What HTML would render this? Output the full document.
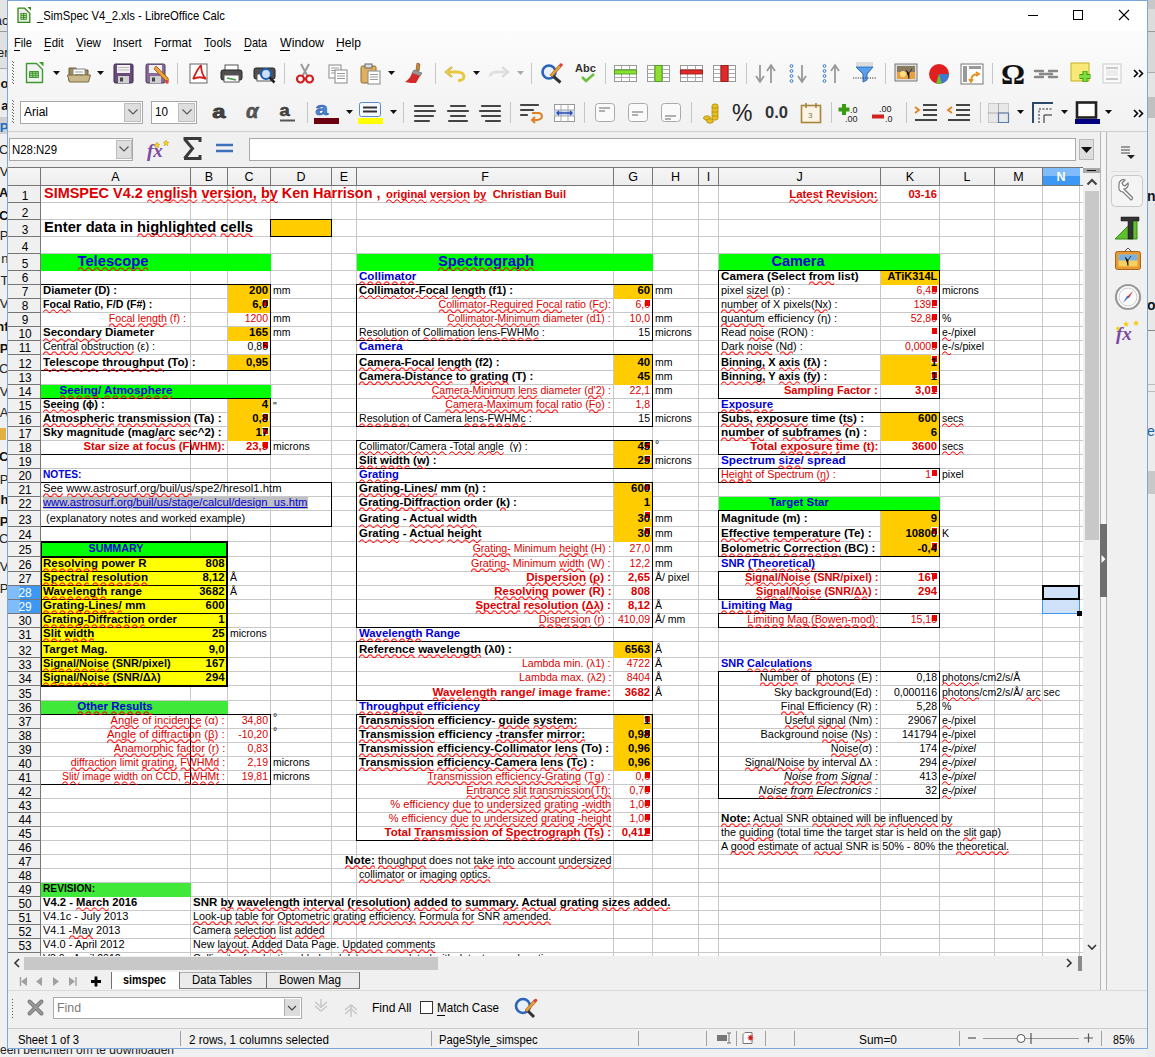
<!DOCTYPE html><html><head><meta charset="utf-8"><style>
html,body{margin:0;padding:0;width:1155px;height:1057px;overflow:hidden;background:#f0f0f0;}
body{position:relative;font-family:"Liberation Sans",sans-serif;}
.t{position:absolute;white-space:pre;line-height:1;}
.r{position:absolute;}
svg.r{overflow:visible;}
.w{position:relative;}
.w svg{position:absolute;left:0;top:100%;margin-top:-1.5px;width:100%;height:4px;overflow:hidden;}
</style></head><body>
<svg width="0" height="0" style="position:absolute"><defs><pattern id="wv" width="8" height="4" patternUnits="userSpaceOnUse"><path d="M-1 3.5 L0 3.5 L2 1 L4 1 L6 3.5 L9 3.5" fill="none" stroke="#f00" stroke-width="1"/></pattern></defs></svg>
<div class="r" style="left:0px;top:0px;width:1155px;height:1057px;background:#f0f0f0;"></div>
<div class="r" style="left:1147px;top:0px;width:8px;height:9px;background:#c8c8c8;"></div>
<div class="r" style="left:1147px;top:9px;width:8px;height:22px;background:#dcdcdc;"></div>
<div class="r" style="left:1147px;top:31px;width:8px;height:1px;background:#999999;"></div>
<div class="r" style="left:1147px;top:32px;width:8px;height:40px;background:#d8d8d8;"></div>
<div class="r" style="left:1147px;top:72px;width:8px;height:1px;background:#aaaaaa;"></div>
<div class="r" style="left:1147px;top:73px;width:8px;height:24px;background:#e4e4e4;"></div>
<div class="r" style="left:1147px;top:97px;width:8px;height:21px;background:#c0c0c0;"></div>
<div class="r" style="left:1147px;top:118px;width:8px;height:212px;background:#e8e8e8;"></div>
<div class="r" style="left:1147px;top:330px;width:8px;height:1px;background:#888888;"></div>
<div class="r" style="left:1147px;top:331px;width:8px;height:53px;background:#ececec;"></div>
<div class="r" style="left:1147px;top:384px;width:8px;height:1px;background:#bbbbbb;"></div>
<div class="r" style="left:1147px;top:385px;width:8px;height:6px;background:#ececec;"></div>
<div class="r" style="left:1147px;top:391px;width:8px;height:1px;background:#bbbbbb;"></div>
<div class="r" style="left:1147px;top:392px;width:8px;height:79px;background:#ececec;"></div>
<div class="r" style="left:1147px;top:471px;width:8px;height:23px;background:#c8c8c8;"></div>
<div class="r" style="left:1147px;top:494px;width:8px;height:563px;background:#ececec;"></div>
<div class="r" style="left:0px;top:0px;width:8px;height:31px;background:#e4e4e4;"></div>
<div class="r" style="left:0px;top:31px;width:8px;height:1px;background:#999;"></div>
<div class="r" style="left:0px;top:32px;width:8px;height:36px;background:#e0e0e0;"></div>
<div class="r" style="left:0px;top:68px;width:8px;height:1px;background:#aaa;"></div>
<div class="r" style="left:0px;top:69px;width:8px;height:48px;background:#ececec;"></div>
<div class="r" style="left:0px;top:117px;width:8px;height:17px;background:#d0d0d0;"></div>
<div class="r" style="left:0px;top:134px;width:8px;height:923px;background:#f0f0f0;"></div>
<div class="t" style="right:1146.50px;top:14.00px;font-size:13px;color:#222;">ac</div>
<div class="t" style="right:1146.50px;top:46.00px;font-size:13px;color:#222;">er</div>
<div class="t" style="right:1146.50px;top:77.00px;font-size:13px;color:#111;font-weight:bold;">o</div>
<div class="t" style="right:1146.50px;top:99.00px;font-size:13px;color:#111;font-weight:bold;">a</div>
<div class="t" style="right:1146.50px;top:121.00px;font-size:13px;color:#1a6fc0;font-weight:bold;">P</div>
<div class="t" style="right:1146.50px;top:143.00px;font-size:13px;color:#222;">C</div>
<div class="t" style="right:1146.50px;top:165.00px;font-size:13px;color:#222;">V</div>
<div class="t" style="right:1146.50px;top:186.00px;font-size:13px;color:#111;font-weight:bold;">A</div>
<div class="t" style="right:1146.50px;top:209.00px;font-size:13px;color:#111;font-weight:bold;">C</div>
<div class="t" style="right:1146.50px;top:229.00px;font-size:13px;color:#222;">P</div>
<div class="t" style="right:1146.50px;top:252.00px;font-size:13px;color:#222;">n</div>
<div class="t" style="right:1146.50px;top:274.00px;font-size:13px;color:#222;">T</div>
<div class="t" style="right:1146.50px;top:297.00px;font-size:13px;color:#222;">V</div>
<div class="t" style="right:1146.50px;top:320.00px;font-size:13px;color:#111;font-weight:bold;">nf</div>
<div class="t" style="right:1146.50px;top:342.00px;font-size:13px;color:#111;font-weight:bold;">P</div>
<div class="t" style="right:1146.50px;top:362.00px;font-size:13px;color:#222;">C</div>
<div class="t" style="right:1146.50px;top:385.00px;font-size:13px;color:#222;">V</div>
<div class="t" style="right:1146.50px;top:406.00px;font-size:13px;color:#222;">A</div>
<div class="t" style="right:1146.50px;top:450.00px;font-size:13px;color:#111;font-weight:bold;">C</div>
<div class="t" style="right:1146.50px;top:473.00px;font-size:13px;color:#222;">P</div>
<div class="t" style="right:1146.50px;top:493.00px;font-size:13px;color:#111;font-weight:bold;">jh</div>
<div class="t" style="right:1146.50px;top:515.00px;font-size:13px;color:#111;font-weight:bold;">P</div>
<div class="t" style="right:1146.50px;top:532.00px;font-size:13px;color:#222;">C</div>
<div class="t" style="right:1146.50px;top:560.00px;font-size:13px;color:#222;">V</div>
<div class="t" style="right:1146.50px;top:582.00px;font-size:13px;color:#222;">P</div>
<div class="r" style="left:0px;top:428px;width:6px;height:12px;background:#e0b040;"></div>
<div class="t" style="left:1147.00px;top:188.65px;font-size:14px;color:#111;font-weight:bold;">n</div>
<div class="t" style="left:1147.00px;top:297.65px;font-size:14px;color:#111;font-weight:bold;">on</div>
<div class="t" style="left:1147.00px;top:424.15px;font-size:14px;color:#1a5fb0;">e</div>
<div class="t" style="left:0.00px;top:1044.42px;font-size:12.5px;color:#222;transform-origin:left top;transform: scaleX(0.9593);">een benchten om te downloaden</div>
<div class="r" style="left:7px;top:0px;width:1141px;height:1049px;background:#7aa7dc;"></div>
<div class="r" style="left:8px;top:1px;width:1139px;height:1047px;background:#f0f0f0;"></div>
<div class="r" style="left:8px;top:1px;width:1139px;height:30px;background:#ffffff;"></div>
<div class="r" style="left:8px;top:31px;width:1139px;height:100px;background:linear-gradient(#fcfcfc,#f1f1f1);"></div>
<div class="r" style="left:8px;top:131px;width:1139px;height:1px;background:#cdcdcd;"></div>
<div class="r" style="left:8px;top:132px;width:1092px;height:35px;background:#f0f0f0;"></div>
<div class="t" style="left:37.00px;top:9.07px;font-size:13.5px;color:#000;transform-origin:left top;transform: scaleX(0.8361);">_SimSpec V4_2.xls - LibreOffice Calc</div>
<svg class="r" style="left:1020px;top:5px" width="120" height="22">
<line x1="8" y1="10.5" x2="18" y2="10.5" stroke="#000" stroke-width="1"/>
<rect x="53.5" y="5.5" width="9" height="9" fill="none" stroke="#000"/>
<line x1="99" y1="5" x2="109" y2="15" stroke="#000" stroke-width="1.1"/><line x1="109" y1="5" x2="99" y2="15" stroke="#000" stroke-width="1.1"/>
</svg>
<svg class="r" style="left:17px;top:7px" width="15" height="17">
<path d="M1 1.2h6.6l5.2 5.2v9H1z" fill="#efeaef" stroke="#2f8a12" stroke-width="1.3" stroke-linejoin="round"/>
<path d="M10.5 0h3.5v3.7z" fill="#2f8a12"/>
<rect x="3.4" y="6" width="6.4" height="6.8" rx="0.6" fill="#2f8a12"/>
<path d="M4.4 7.3h1.7M7.2 7.3h1.7M4.4 9.3h1.7M7.2 9.3h1.7M4.4 11.3h1.7M7.2 11.3h1.7" stroke="#fff" stroke-width="0.9"/>
</svg>
<div class="t" style="left:14.00px;top:36.07px;font-size:13.5px;color:#000;transform-origin:left top;transform: scaleX(0.8275);">File</div>
<div class="t" style="left:44.00px;top:36.07px;font-size:13.5px;color:#000;transform-origin:left top;transform: scaleX(0.8469);">Edit</div>
<div class="t" style="left:75.80px;top:36.07px;font-size:13.5px;color:#000;transform-origin:left top;transform: scaleX(0.8616);">View</div>
<div class="t" style="left:113.20px;top:36.07px;font-size:13.5px;color:#000;transform-origin:left top;transform: scaleX(0.8530);">Insert</div>
<div class="t" style="left:154.00px;top:36.07px;font-size:13.5px;color:#000;transform-origin:left top;transform: scaleX(0.8771);">Format</div>
<div class="t" style="left:204.30px;top:36.07px;font-size:13.5px;color:#000;transform-origin:left top;transform: scaleX(0.8694);">Tools</div>
<div class="t" style="left:244.20px;top:36.07px;font-size:13.5px;color:#000;transform-origin:left top;transform: scaleX(0.8136);">Data</div>
<div class="t" style="left:279.80px;top:36.07px;font-size:13.5px;color:#000;transform-origin:left top;transform: scaleX(0.9164);">Window</div>
<div class="t" style="left:336.00px;top:36.07px;font-size:13.5px;color:#000;transform-origin:left top;transform: scaleX(0.8968);">Help</div>
<div class="r" style="left:14px;top:50px;width:6px;height:1px;background:#000;"></div>
<div class="r" style="left:44px;top:50px;width:6px;height:1px;background:#000;"></div>
<div class="r" style="left:76px;top:50px;width:7px;height:1px;background:#000;"></div>
<div class="r" style="left:113px;top:50px;width:3px;height:1px;background:#000;"></div>
<div class="r" style="left:161px;top:50px;width:7px;height:1px;background:#000;"></div>
<div class="r" style="left:204px;top:50px;width:6px;height:1px;background:#000;"></div>
<div class="r" style="left:244px;top:50px;width:7px;height:1px;background:#000;"></div>
<div class="r" style="left:280px;top:50px;width:10px;height:1px;background:#000;"></div>
<div class="r" style="left:336px;top:50px;width:7px;height:1px;background:#000;"></div>
<div class="r" style="left:12px;top:61px;width:1px;height:1px;background:#6a6a6a;"></div>
<div class="r" style="left:12px;top:64px;width:1px;height:1px;background:#6a6a6a;"></div>
<div class="r" style="left:12px;top:67px;width:1px;height:1px;background:#6a6a6a;"></div>
<div class="r" style="left:12px;top:70px;width:1px;height:1px;background:#6a6a6a;"></div>
<div class="r" style="left:12px;top:73px;width:1px;height:1px;background:#6a6a6a;"></div>
<div class="r" style="left:12px;top:76px;width:1px;height:1px;background:#6a6a6a;"></div>
<div class="r" style="left:12px;top:79px;width:1px;height:1px;background:#6a6a6a;"></div>
<div class="r" style="left:12px;top:82px;width:1px;height:1px;background:#6a6a6a;"></div>
<div class="r" style="left:13px;top:62px;width:1px;height:1px;background:#6a6a6a;"></div>
<div class="r" style="left:13px;top:65px;width:1px;height:1px;background:#6a6a6a;"></div>
<div class="r" style="left:13px;top:68px;width:1px;height:1px;background:#6a6a6a;"></div>
<div class="r" style="left:13px;top:71px;width:1px;height:1px;background:#6a6a6a;"></div>
<div class="r" style="left:13px;top:74px;width:1px;height:1px;background:#6a6a6a;"></div>
<div class="r" style="left:13px;top:77px;width:1px;height:1px;background:#6a6a6a;"></div>
<div class="r" style="left:13px;top:80px;width:1px;height:1px;background:#6a6a6a;"></div>
<div class="r" style="left:13px;top:83px;width:1px;height:1px;background:#6a6a6a;"></div>
<svg class="r" style="left:25px;top:62px" width="19" height="22" viewBox="0 0 19 22"><path d="M1.5 1.5h10l6 6v13h-16z" fill="#f4f2f4" stroke="#3c9a2c" stroke-width="1.4" stroke-linejoin="round"/><path d="M14 0h4.5v4.5z" fill="#3c9a2c"/><rect x="4" y="9" width="10" height="7" rx="0.8" fill="#3c9a2c"/><path d="M5 10.8h2.2M8.2 10.8h2.2M11.2 10.8h2M5 12.6h2.2M8.2 12.6h2.2M11.2 12.6h2M5 14.4h2.2M8.2 14.4h2.2M11.2 14.4h2" stroke="#b8e0a8" stroke-width="0.9"/></svg>
<svg class="r" style="left:53px;top:71px" width="8" height="5" viewBox="0 0 8 5"><path d="M0 0h7l-3.5 4z" fill="#111"/></svg>
<svg class="r" style="left:67px;top:64px" width="24" height="19" viewBox="0 0 24 19"><path d="M2 4h7l2 2h10v11H2z" fill="#a08a5a" stroke="#6e5a32"/><rect x="6" y="5" width="12" height="9" fill="#fff" stroke="#888"/><path d="M8 8h8M8 10.5h8" stroke="#999"/><path d="M0.5 11h23l-2 7H2.5z" fill="#c8b88a" stroke="#7a6a42"/></svg>
<svg class="r" style="left:97px;top:71px" width="8" height="5" viewBox="0 0 8 5"><path d="M0 0h7l-3.5 4z" fill="#111"/></svg>
<svg class="r" style="left:113px;top:63px" width="21" height="21" viewBox="0 0 21 21"><rect x="1" y="1" width="19" height="19" rx="1.5" fill="#6a4a7a" stroke="#3a2a4a"/><rect x="4" y="2" width="13" height="8" fill="#f0f0f0"/><path d="M5 4.5h11M5 7h11" stroke="#bbb"/><rect x="5" y="13" width="11" height="7" fill="#d0d0d0"/><rect x="7" y="14.5" width="3" height="4" fill="#444"/></svg>
<svg class="r" style="left:145px;top:63px" width="25" height="22" viewBox="0 0 25 22"><rect x="1" y="1" width="19" height="19" rx="1.5" fill="#8a6a9a" stroke="#4a3a5a"/><rect x="4" y="2" width="13" height="8" fill="#f0f0f0"/><rect x="5" y="13" width="11" height="7" fill="#d0d0d0"/><rect x="7" y="14.5" width="3" height="4" fill="#444"/><path d="M9 6l12 12 2.5-.5-.5-2.5L11 3z" fill="#f0a030" stroke="#7a4a10" stroke-width="0.7"/><circle cx="22" cy="19" r="1.8" fill="#e04040"/></svg>
<div class="r" style="left:177px;top:63px;width:1px;height:21px;background:#c6c6c6;"></div>
<svg class="r" style="left:189px;top:63px" width="19" height="21" viewBox="0 0 19 21"><rect x="1" y="1" width="17" height="19" fill="#fff" stroke="#666"/><path d="M12 2c-5 6-6 10-8 14M12 2c0 6 1 10 5 14M4 16c4-2 8-3 13 0" fill="none" stroke="#d02020" stroke-width="1.8"/></svg>
<svg class="r" style="left:220px;top:64px" width="23" height="19" viewBox="0 0 23 19"><rect x="5" y="1" width="13" height="6" fill="#fff" stroke="#555"/><rect x="1" y="6" width="21" height="10" rx="2" fill="#505050" stroke="#222"/><rect x="4" y="11" width="15" height="7" fill="#fff" stroke="#555"/><path d="M7 14l9 2" stroke="#4a9a4a" stroke-width="1.5"/></svg>
<svg class="r" style="left:253px;top:64px" width="23" height="20" viewBox="0 0 23 20"><rect x="1" y="4" width="21" height="11" rx="2" fill="#505050" stroke="#222"/><rect x="4" y="10" width="14" height="7" fill="#fff" stroke="#555"/><circle cx="13" cy="10" r="5" fill="#cfe0f5" stroke="#1e5fb0" stroke-width="2.2"/><path d="M16.5 13.5l5 5" stroke="#222" stroke-width="2.5"/></svg>
<div class="r" style="left:284px;top:63px;width:1px;height:21px;background:#c6c6c6;"></div>
<svg class="r" style="left:295px;top:62px" width="20" height="22" viewBox="0 0 20 22"><path d="M6 2l7 13M14 2L7 15" stroke="#9a9a9a" stroke-width="2"/><circle cx="5.5" cy="17" r="3.5" fill="none" stroke="#d02020" stroke-width="2.2"/><circle cx="14.5" cy="17" r="3.5" fill="none" stroke="#d02020" stroke-width="2.2"/></svg>
<svg class="r" style="left:328px;top:64px" width="21" height="20" viewBox="0 0 21 20"><rect x="1" y="1" width="12" height="13" fill="#fff" stroke="#888"/><path d="M3 4h8M3 6.5h8M3 9h8" stroke="#999"/><rect x="7" y="6" width="12" height="13" fill="#fff" stroke="#888"/><path d="M9 9.5h8M9 12h8M9 14.5h8" stroke="#999"/></svg>
<svg class="r" style="left:360px;top:63px" width="22" height="22" viewBox="0 0 22 22"><rect x="1" y="3" width="15" height="17" rx="1.5" fill="#e0b060" stroke="#8a6a2a"/><rect x="5" y="1" width="7" height="4" fill="#ddd" stroke="#666"/><rect x="8" y="8" width="12" height="13" fill="#fff" stroke="#888"/><path d="M10 11.5h8M10 14h8M10 16.5h8" stroke="#999"/></svg>
<svg class="r" style="left:388px;top:71px" width="8" height="5" viewBox="0 0 8 5"><path d="M0 0h7l-3.5 4z" fill="#111"/></svg>
<svg class="r" style="left:404px;top:62px" width="23" height="22" viewBox="0 0 23 22"><path d="M13 1l3 1-1 7-3-1z" fill="#c08840" stroke="#7a4a10" stroke-width="0.6"/><path d="M10 8l8 3-2 3-8-3z" fill="#999" stroke="#555" stroke-width="0.6"/><path d="M8 11l8 3-4 7c-3 0-7 0-11-1 3-2 6-5 7-9z" fill="#d42a2a"/></svg>
<div class="r" style="left:435px;top:63px;width:1px;height:21px;background:#c6c6c6;"></div>
<svg class="r" style="left:444px;top:65px" width="23" height="17" viewBox="0 0 23 17"><path d="M8 2L2 7l6 5" fill="none" stroke="#c8a020" stroke-width="2.2" stroke-linejoin="round"/><path d="M3 7h10c5 0 7 2.5 7 4.5s-2 4-6 4" fill="none" stroke="#e8c840" stroke-width="3"/><path d="M8 2L2 7l6 5" fill="none" stroke="#f0d860" stroke-width="1"/></svg>
<svg class="r" style="left:473px;top:71px" width="8" height="5" viewBox="0 0 8 5"><path d="M0 0h7l-3.5 4z" fill="#111"/></svg>
<svg class="r" style="left:487px;top:65px" width="23" height="17" viewBox="0 0 23 17"><path d="M15 2l6 5-6 5" fill="none" stroke="#d8d8d8" stroke-width="2.2"/><path d="M20 7H10c-5 0-7 2.5-7 4.5" fill="none" stroke="#e0e0e0" stroke-width="3"/></svg>
<svg class="r" style="left:517px;top:71px" width="8" height="5" viewBox="0 0 8 5"><path d="M0 0h7l-3.5 4z" fill="#aaa"/></svg>
<div class="r" style="left:531px;top:63px;width:1px;height:21px;background:#c6c6c6;"></div>
<svg class="r" style="left:540px;top:62px" width="24" height="22" viewBox="0 0 24 22"><circle cx="9" cy="10" r="6.5" fill="#eaf2fb" stroke="#2a63b8" stroke-width="2.6"/><path d="M13.5 14.5l7 6" stroke="#333" stroke-width="3"/><path d="M10 13l9-10 2 2-9 10z" fill="#f0a030" stroke="#7a4a10" stroke-width="0.6"/><circle cx="21" cy="3" r="1.8" fill="#e04040"/></svg>
<svg class="r" style="left:574px;top:62px" width="24" height="22" viewBox="0 0 24 22"><text x="1" y="10" font-family="Liberation Sans" font-weight="bold" font-size="11" fill="#333">Abc</text><path d="M8 15l4 4 8-7" fill="none" stroke="#6cc040" stroke-width="2.6"/></svg>
<div class="r" style="left:605px;top:63px;width:1px;height:21px;background:#c6c6c6;"></div>
<svg class="r" style="left:613px;top:63px" width="25" height="21" viewBox="0 0 25 21"><rect x="1.5" y="2.5" width="22" height="16" fill="#fff" stroke="#999"/><path d="M1.5 6.5h22" stroke="#aaa"/><path d="M1.5 10.5h22" stroke="#aaa"/><path d="M1.5 14.5h22" stroke="#aaa"/><path d="M8.5 2.5v16" stroke="#aaa"/><path d="M16.5 2.5v16" stroke="#aaa"/><rect x="1.5" y="7" width="22" height="4" fill="#8ee030" stroke="#3a9a10" stroke-width="0.8"/></svg>
<svg class="r" style="left:646px;top:63px" width="25" height="21" viewBox="0 0 25 21"><rect x="1.5" y="2.5" width="22" height="16" fill="#fff" stroke="#999"/><path d="M1.5 6.5h22" stroke="#aaa"/><path d="M1.5 10.5h22" stroke="#aaa"/><path d="M1.5 14.5h22" stroke="#aaa"/><path d="M8.5 2.5v16" stroke="#aaa"/><path d="M16.5 2.5v16" stroke="#aaa"/><rect x="9" y="2.5" width="7" height="16" fill="#8ee030" stroke="#3a9a10" stroke-width="0.8"/></svg>
<svg class="r" style="left:679px;top:63px" width="25" height="21" viewBox="0 0 25 21"><rect x="1.5" y="2.5" width="22" height="16" fill="#fff" stroke="#999"/><path d="M1.5 6.5h22" stroke="#aaa"/><path d="M1.5 10.5h22" stroke="#aaa"/><path d="M1.5 14.5h22" stroke="#aaa"/><path d="M8.5 2.5v16" stroke="#aaa"/><path d="M16.5 2.5v16" stroke="#aaa"/><rect x="1.5" y="7" width="22" height="4" fill="#e02a2a" stroke="#9a1010" stroke-width="0.8"/></svg>
<svg class="r" style="left:712px;top:63px" width="25" height="21" viewBox="0 0 25 21"><rect x="1.5" y="2.5" width="22" height="16" fill="#fff" stroke="#999"/><path d="M1.5 6.5h22" stroke="#aaa"/><path d="M1.5 10.5h22" stroke="#aaa"/><path d="M1.5 14.5h22" stroke="#aaa"/><path d="M8.5 2.5v16" stroke="#aaa"/><path d="M16.5 2.5v16" stroke="#aaa"/><rect x="9" y="2.5" width="7" height="16" fill="#e02a2a" stroke="#9a1010" stroke-width="0.8"/></svg>
<div class="r" style="left:746px;top:63px;width:1px;height:21px;background:#c6c6c6;"></div>
<svg class="r" style="left:753px;top:63px" width="26" height="22" viewBox="0 0 26 22"><path d="M7 2v16M3 13l4 6 4-6" fill="none" stroke="#999" stroke-width="1.8"/><path d="M18 20V4M14 8l4-6 4 6" fill="none" stroke="#999" stroke-width="1.8"/></svg>
<svg class="r" style="left:788px;top:63px" width="22" height="22" viewBox="0 0 22 22"><circle cx="3.5" cy="3" r="1.4" fill="none" stroke="#3a7ad0"/><circle cx="3.5" cy="8" r="1.4" fill="none" stroke="#3a7ad0"/><circle cx="3.5" cy="13" r="1.4" fill="none" stroke="#3a7ad0"/><circle cx="3.5" cy="18" r="1.4" fill="none" stroke="#3a7ad0"/><path d="M14 2v16M10 13l4 6 4-6" fill="none" stroke="#999" stroke-width="1.8"/></svg>
<svg class="r" style="left:821px;top:63px" width="22" height="22" viewBox="0 0 22 22"><circle cx="3.5" cy="3" r="1.4" fill="none" stroke="#3a7ad0"/><circle cx="3.5" cy="8" r="1.4" fill="none" stroke="#3a7ad0"/><circle cx="3.5" cy="13" r="1.4" fill="none" stroke="#3a7ad0"/><circle cx="3.5" cy="18" r="1.4" fill="none" stroke="#3a7ad0"/><path d="M14 20V4M10 8l4-6 4 6" fill="none" stroke="#999" stroke-width="1.8"/></svg>
<svg class="r" style="left:853px;top:62px" width="23" height="22" viewBox="0 0 23 22"><rect x="3" y="0" width="17" height="4" fill="#ddd"/><path d="M3 5h17l-6 7v6l-4 2v-8z" fill="#5aa0e8" stroke="#2a6ab8"/><path d="M0 16h23" stroke="#333" stroke-dasharray="1.2 1.2"/></svg>
<div class="r" style="left:885px;top:63px;width:1px;height:21px;background:#c6c6c6;"></div>
<svg class="r" style="left:894px;top:63px" width="24" height="20" viewBox="0 0 24 20"><rect x="1" y="1" width="22" height="17" fill="#ddd" stroke="#777"/><rect x="3" y="3" width="18" height="13" fill="#e8a040"/><rect x="3" y="3" width="18" height="6" fill="#8a7a60"/><circle cx="9" cy="11" r="3" fill="#ffe080"/><path d="M15 16v-6l-3-3M15 10l3-4" stroke="#333" stroke-width="1"/></svg>
<svg class="r" style="left:928px;top:63px" width="22" height="22" viewBox="0 0 22 22"><circle cx="11" cy="11" r="10" fill="#e02020"/><path d="M11 11L21 11A10 10 0 0 1 14 20.5z" fill="#3a7ad0"/><path d="M11 11L14 20.5A10 10 0 0 1 8 20.5z" fill="#6cc040"/></svg>
<svg class="r" style="left:960px;top:63px" width="24" height="22" viewBox="0 0 24 22"><rect x="1" y="1" width="22" height="20" fill="#fff" stroke="#777"/><rect x="3" y="3" width="4" height="16" fill="#999"/><rect x="9" y="3" width="12" height="3" fill="#999"/><path d="M11 18c0-5 2-7 7-7M16 9l3 2-3 2M9 16l2 3 2-3" fill="none" stroke="#e89020" stroke-width="1.8"/></svg>
<div class="r" style="left:992px;top:63px;width:1px;height:21px;background:#c6c6c6;"></div>
<svg class="r" style="left:1001px;top:62px" width="25" height="24" viewBox="0 0 25 24"><text x="0" y="22" font-family="Liberation Serif" font-weight="bold" font-size="30" fill="#111">Ω</text></svg>
<svg class="r" style="left:1034px;top:67px" width="24" height="14" viewBox="0 0 24 14"><path d="M1 4h8M1 10h8M15 4h8M15 10h8M6 7h12" stroke="#888" stroke-width="2.4" stroke-linecap="round"/></svg>
<svg class="r" style="left:1070px;top:62px" width="22" height="22" viewBox="0 0 22 22"><rect x="1" y="1" width="18" height="18" fill="#f8e878" stroke="#c8b020"/><path d="M15 9v11M9.5 14.5h11" stroke="#3a9a10" stroke-width="5"/><path d="M15 9.5v10M10 14.5h10" stroke="#7ee040" stroke-width="3"/></svg>
<svg class="r" style="left:1102px;top:63px" width="20" height="21" viewBox="0 0 20 21"><rect x="1" y="1" width="18" height="19" fill="#fafafa" stroke="#ccc"/><path d="M4 5h12M4 16h12" stroke="#bbb" stroke-width="1.6"/><path d="M4 8h12M4 10h12M4 12h12" stroke="#ddd"/></svg>
<svg class="r" style="left:1133px;top:69px" width="12" height="9" viewBox="0 0 12 9"><path d="M1 1l3.5 3.5L1 8M6 1l3.5 3.5L6 8" fill="none" stroke="#000" stroke-width="1.6"/></svg>
<div class="r" style="left:12px;top:100px;width:1px;height:1px;background:#6a6a6a;"></div>
<div class="r" style="left:12px;top:103px;width:1px;height:1px;background:#6a6a6a;"></div>
<div class="r" style="left:12px;top:106px;width:1px;height:1px;background:#6a6a6a;"></div>
<div class="r" style="left:12px;top:109px;width:1px;height:1px;background:#6a6a6a;"></div>
<div class="r" style="left:12px;top:112px;width:1px;height:1px;background:#6a6a6a;"></div>
<div class="r" style="left:12px;top:115px;width:1px;height:1px;background:#6a6a6a;"></div>
<div class="r" style="left:12px;top:118px;width:1px;height:1px;background:#6a6a6a;"></div>
<div class="r" style="left:12px;top:121px;width:1px;height:1px;background:#6a6a6a;"></div>
<div class="r" style="left:13px;top:101px;width:1px;height:1px;background:#6a6a6a;"></div>
<div class="r" style="left:13px;top:104px;width:1px;height:1px;background:#6a6a6a;"></div>
<div class="r" style="left:13px;top:107px;width:1px;height:1px;background:#6a6a6a;"></div>
<div class="r" style="left:13px;top:110px;width:1px;height:1px;background:#6a6a6a;"></div>
<div class="r" style="left:13px;top:113px;width:1px;height:1px;background:#6a6a6a;"></div>
<div class="r" style="left:13px;top:116px;width:1px;height:1px;background:#6a6a6a;"></div>
<div class="r" style="left:13px;top:119px;width:1px;height:1px;background:#6a6a6a;"></div>
<div class="r" style="left:13px;top:122px;width:1px;height:1px;background:#6a6a6a;"></div>
<div class="r" style="left:20px;top:101px;width:123px;height:23px;background:#a8a8a8;"></div>
<div class="r" style="left:21px;top:102px;width:121px;height:21px;background:#ffffff;"></div>
<div class="r" style="left:124px;top:103px;width:17px;height:19px;background:#dedede;"></div>
<div class="r" style="left:124px;top:103px;width:17px;height:1px;background:#bdbdbd;"></div>
<div class="r" style="left:124px;top:103px;width:1px;height:19px;background:#bdbdbd;"></div>
<div class="r" style="left:140px;top:103px;width:1px;height:19px;background:#bdbdbd;"></div>
<div class="r" style="left:124px;top:121px;width:17px;height:1px;background:#bdbdbd;"></div>
<svg class="r" style="left:127px;top:108px" width="12" height="8" viewBox="0 0 12 8"><path d="M1.5 1.5l4.5 4.5 4.5-4.5" fill="none" stroke="#555" stroke-width="1.1"/></svg>
<div class="t" style="left:24.00px;top:106.42px;font-size:12.5px;color:#000;transform-origin:left top;transform: scaleX(0.9598);">Arial</div>
<div class="r" style="left:151px;top:101px;width:46px;height:23px;background:#a8a8a8;"></div>
<div class="r" style="left:152px;top:102px;width:44px;height:21px;background:#ffffff;"></div>
<div class="r" style="left:178px;top:103px;width:17px;height:19px;background:#dedede;"></div>
<div class="r" style="left:178px;top:103px;width:17px;height:1px;background:#bdbdbd;"></div>
<div class="r" style="left:178px;top:103px;width:1px;height:19px;background:#bdbdbd;"></div>
<div class="r" style="left:194px;top:103px;width:1px;height:19px;background:#bdbdbd;"></div>
<div class="r" style="left:178px;top:121px;width:17px;height:1px;background:#bdbdbd;"></div>
<svg class="r" style="left:181px;top:108px" width="12" height="8" viewBox="0 0 12 8"><path d="M1.5 1.5l4.5 4.5 4.5-4.5" fill="none" stroke="#555" stroke-width="1.1"/></svg>
<div class="t" style="left:155.00px;top:106.42px;font-size:12.5px;color:#000;transform-origin:left top;transform: scaleX(0.9350);">10</div>
<svg class="r" style="left:211px;top:100px" width="24" height="24" viewBox="0 0 24 24"><text x="1" y="18" transform="scale(1.25,1)" font-family="Liberation Sans" font-weight="bold" font-size="19" fill="#444" stroke="#333" stroke-width="0.8">a</text></svg>
<svg class="r" style="left:245px;top:100px" width="22" height="24" viewBox="0 0 22 24"><text x="1" y="18" font-family="Liberation Sans" font-style="italic" font-weight="bold" font-size="20" fill="#555" stroke="#444" stroke-width="0.5">α</text></svg>
<svg class="r" style="left:279px;top:100px" width="20" height="26" viewBox="0 0 20 26"><text x="0.5" y="16" transform="scale(1.15,1)" font-family="Liberation Sans" font-weight="bold" font-size="16" fill="#444" stroke="#333" stroke-width="0.5">a</text><path d="M1 20.5h15" stroke="#555" stroke-width="2"/></svg>
<div class="r" style="left:307px;top:102px;width:1px;height:21px;background:#c6c6c6;"></div>
<svg class="r" style="left:314px;top:99px" width="26" height="26" viewBox="0 0 26 26"><text x="1" y="16" transform="scale(1.2,1)" font-family="Liberation Sans" font-weight="bold" font-size="19" fill="#4a88d8" stroke="#2a5aa8" stroke-width="0.6">a</text><rect x="0" y="19" width="25" height="6" fill="#6a0010"/></svg>
<svg class="r" style="left:346px;top:110px" width="8" height="5" viewBox="0 0 8 5"><path d="M0 0h7l-3.5 4z" fill="#111"/></svg>
<svg class="r" style="left:358px;top:101px" width="26" height="24" viewBox="0 0 26 24"><rect x="1.5" y="1.5" width="21" height="14" rx="2" fill="#f4f8ff" stroke="#5a8ad0"/><path d="M5 6.5h14M5 10.5h14" stroke="#333" stroke-width="2"/><rect x="0" y="17" width="25" height="6" fill="#ffff00"/></svg>
<svg class="r" style="left:390px;top:110px" width="8" height="5" viewBox="0 0 8 5"><path d="M0 0h7l-3.5 4z" fill="#111"/></svg>
<div class="r" style="left:403px;top:102px;width:1px;height:21px;background:#c6c6c6;"></div>
<svg class="r" style="left:413px;top:103px" width="22" height="20" viewBox="0 0 22 20"><path d="M2 3h18" stroke="#444" stroke-width="2.2" stroke-linecap="round"/><path d="M2 8h20" stroke="#444" stroke-width="2.2" stroke-linecap="round"/><path d="M2 13h18" stroke="#444" stroke-width="2.2" stroke-linecap="round"/><path d="M2 18h14" stroke="#444" stroke-width="2.2" stroke-linecap="round"/></svg>
<svg class="r" style="left:446px;top:103px" width="22" height="20" viewBox="0 0 22 20"><path d="M5 3h14" stroke="#444" stroke-width="2.2" stroke-linecap="round"/><path d="M2 8h20" stroke="#444" stroke-width="2.2" stroke-linecap="round"/><path d="M5 13h14" stroke="#444" stroke-width="2.2" stroke-linecap="round"/><path d="M3 18h18" stroke="#444" stroke-width="2.2" stroke-linecap="round"/></svg>
<svg class="r" style="left:479px;top:103px" width="22" height="20" viewBox="0 0 22 20"><path d="M3 3h18" stroke="#444" stroke-width="2.2" stroke-linecap="round"/><path d="M1 8h20" stroke="#444" stroke-width="2.2" stroke-linecap="round"/><path d="M3 13h18" stroke="#444" stroke-width="2.2" stroke-linecap="round"/><path d="M7 18h14" stroke="#444" stroke-width="2.2" stroke-linecap="round"/></svg>
<div class="r" style="left:510px;top:102px;width:1px;height:21px;background:#c6c6c6;"></div>
<svg class="r" style="left:519px;top:102px" width="26" height="22" viewBox="0 0 26 22"><path d="M2 3h17M2 8h12M2 13h6" stroke="#444" stroke-width="2.2" stroke-linecap="round"/><path d="M13 11h6c3 0 4 2 4 3.5S21 18 18 18h-4M16 15l-3 3 3 3" fill="none" stroke="#e08020" stroke-width="2"/></svg>
<svg class="r" style="left:553px;top:102px" width="23" height="22" viewBox="0 0 23 22"><rect x="1.5" y="2.5" width="20" height="17" fill="#fff" stroke="#999"/><rect x="1.5" y="8" width="20" height="6" fill="#c8dcf4"/><path d="M1.5 8h20M1.5 14h20M8 2.5v17M15 2.5v17" stroke="#aaa"/><path d="M4 11h15M6 9l-2 2 2 2M17 9l2 2-2 2" fill="none" stroke="#2a4ab0" stroke-width="1.3"/></svg>
<div class="r" style="left:584px;top:102px;width:1px;height:21px;background:#c6c6c6;"></div>
<svg class="r" style="left:594px;top:102px" width="22" height="21" viewBox="0 0 22 21"><rect x="1.5" y="1.5" width="19" height="18" rx="3" fill="#fafafa" stroke="#aaa"/><path d="M5 6h11M5 9h6" stroke="#666" stroke-width="1"/></svg>
<svg class="r" style="left:627px;top:102px" width="22" height="21" viewBox="0 0 22 21"><rect x="1.5" y="1.5" width="19" height="18" rx="3" fill="#fafafa" stroke="#aaa"/><path d="M5 10h11M5 13h6" stroke="#666" stroke-width="1"/></svg>
<svg class="r" style="left:660px;top:102px" width="22" height="21" viewBox="0 0 22 21"><rect x="1.5" y="1.5" width="19" height="18" rx="3" fill="#fafafa" stroke="#aaa"/><path d="M5 14h11M5 17h6" stroke="#666" stroke-width="1"/></svg>
<div class="r" style="left:691px;top:102px;width:1px;height:21px;background:#c6c6c6;"></div>
<svg class="r" style="left:703px;top:102px" width="18" height="22" viewBox="0 0 18 22"><rect x="9" y="2" width="6" height="16" rx="2" fill="#e8c020" stroke="#b08a10" stroke-width="0.8"/><path d="M9 6h6M9 10h6M9 14h6" stroke="#b08a10" stroke-width="0.8"/><ellipse cx="4" cy="16" rx="3.5" ry="2.2" fill="#e8c020" stroke="#b08a10" stroke-width="0.8"/><ellipse cx="7" cy="19" rx="3.5" ry="2.2" fill="#e8c020" stroke="#b08a10" stroke-width="0.8"/></svg>
<svg class="r" style="left:731px;top:101px" width="26" height="24" viewBox="0 0 26 24"><text x="1" y="20" font-family="Liberation Sans" font-size="23" fill="#222">%</text></svg>
<div class="t" style="left:765.00px;top:105.46px;font-size:16px;color:#333;font-weight:bold;transform-origin:left top;transform: scaleX(1.0341);">0.0</div>
<svg class="r" style="left:800px;top:102px" width="22" height="22" viewBox="0 0 22 22"><rect x="1.5" y="3.5" width="19" height="17" fill="#fbf4e4" stroke="#a8843a" stroke-width="1.6"/><path d="M6 1v5M16 1v5" stroke="#a8843a" stroke-width="1.6"/><text x="8" y="16" font-family="Liberation Sans" font-size="8" fill="#777">3</text></svg>
<div class="r" style="left:831px;top:102px;width:1px;height:21px;background:#c6c6c6;"></div>
<svg class="r" style="left:838px;top:102px" width="26" height="22" viewBox="0 0 26 22"><path d="M6 2v11M0.5 7.5h11" stroke="#3a9a10" stroke-width="4"/><text x="12" y="11" font-family="Liberation Sans" font-size="9" fill="#222">.0</text><text x="7" y="20" font-family="Liberation Sans" font-size="9" fill="#222">.00</text></svg>
<svg class="r" style="left:871px;top:102px" width="26" height="22" viewBox="0 0 26 22"><text x="8" y="10" font-family="Liberation Sans" font-size="9" fill="#222">.00</text><rect x="1" y="12.5" width="12" height="4" fill="#d02020"/><text x="14" y="20" font-family="Liberation Sans" font-size="9" fill="#222">.0</text></svg>
<div class="r" style="left:906px;top:102px;width:1px;height:21px;background:#c6c6c6;"></div>
<svg class="r" style="left:913px;top:103px" width="26" height="20" viewBox="0 0 26 20"><path d="M10 2h14M10 7h14M10 12h14M2 17h22" stroke="#444" stroke-width="2"/><path d="M2 4l4 3-4 3" fill="none" stroke="#e08020" stroke-width="1.8"/></svg>
<svg class="r" style="left:946px;top:103px" width="26" height="20" viewBox="0 0 26 20"><path d="M10 2h14M10 7h14M10 12h14M2 17h22" stroke="#444" stroke-width="2"/><path d="M6 4L2 7l4 3" fill="none" stroke="#e08020" stroke-width="1.8"/></svg>
<div class="r" style="left:980px;top:102px;width:1px;height:21px;background:#c6c6c6;"></div>
<svg class="r" style="left:987px;top:102px" width="24" height="22" viewBox="0 0 24 22"><rect x="1.5" y="1.5" width="20" height="19" fill="#e8e8e8" stroke="#ccc"/><path d="M11.5 1.5v19M1.5 11h20" stroke="#777" stroke-dasharray="1 1"/><path d="M11.5 11h10v9.5h-10z" fill="none" stroke="#5a7ab0" stroke-width="1.2"/></svg>
<svg class="r" style="left:1017px;top:110px" width="8" height="5" viewBox="0 0 8 5"><path d="M0 0h7l-3.5 4z" fill="#111"/></svg>
<svg class="r" style="left:1031px;top:101px" width="24" height="24" viewBox="0 0 24 24"><path d="M2 22V2h20" fill="none" stroke="#2a4a6a" stroke-width="2"/><path d="M8 22V8h14" fill="none" stroke="#222" stroke-dasharray="2 1.5"/><path d="M13 22v-8h8" fill="none" stroke="#222" stroke-width="1"/></svg>
<svg class="r" style="left:1061px;top:110px" width="8" height="5" viewBox="0 0 8 5"><path d="M0 0h7l-3.5 4z" fill="#111"/></svg>
<svg class="r" style="left:1075px;top:101px" width="25" height="24" viewBox="0 0 25 24"><rect x="2" y="1.5" width="19" height="15" fill="#fff" stroke="#222" stroke-width="2.6"/><rect x="0" y="18" width="25" height="5" fill="#000080"/></svg>
<svg class="r" style="left:1105px;top:110px" width="8" height="5" viewBox="0 0 8 5"><path d="M0 0h7l-3.5 4z" fill="#111"/></svg>
<svg class="r" style="left:1133px;top:109px" width="12" height="9" viewBox="0 0 12 9"><path d="M1 1l3.5 3.5L1 8M6 1l3.5 3.5L6 8" fill="none" stroke="#000" stroke-width="1.6"/></svg>
<div class="r" style="left:9px;top:138px;width:124px;height:23px;background:#a8a8a8;"></div>
<div class="r" style="left:10px;top:139px;width:122px;height:21px;background:#ffffff;"></div>
<div class="r" style="left:116px;top:140px;width:16px;height:19px;background:#dedede;"></div>
<div class="r" style="left:116px;top:140px;width:1px;height:19px;background:#bdbdbd;"></div>
<div class="r" style="left:131px;top:140px;width:1px;height:19px;background:#bdbdbd;"></div>
<div class="r" style="left:116px;top:140px;width:16px;height:1px;background:#bdbdbd;"></div>
<div class="r" style="left:116px;top:158px;width:16px;height:1px;background:#bdbdbd;"></div>
<svg class="r" style="left:118px;top:145px" width="12" height="8" viewBox="0 0 12 8"><path d="M1.5 1.5l4.5 4.5 4.5-4.5" fill="none" stroke="#555" stroke-width="1.1"/></svg>
<div class="t" style="left:12.00px;top:144.42px;font-size:12.5px;color:#000;transform-origin:left top;transform: scaleX(0.9121);">N28:N29</div>
<svg class="r" style="left:147px;top:137px" width="24" height="24" viewBox="0 0 24 24"><text x="0" y="20" font-family="Liberation Serif" font-style="italic" font-weight="bold" font-size="19" fill="#7a4aa0">fx</text><path d="M10 5l1 2 2 .3-1.5 1.4.4 2-1.9-1-1.9 1 .4-2L7 7.3 9 7z" fill="#f0d020" stroke="#b09010" stroke-width="0.4"/><path d="M19 3l1 2 2 .3-1.5 1.4.4 2-1.9-1-1.9 1 .4-2L16 5.3 18 5z" fill="#f0d020" stroke="#b09010" stroke-width="0.4"/></svg>
<svg class="r" style="left:182px;top:136px" width="20" height="26" viewBox="0 0 20 26"><path d="M1.5 2.5h16.5v3.5M2.5 3l8 9.5-8 10M2 22.5h16v-3.5" fill="none" stroke="#3a3a3a" stroke-width="3" stroke-linejoin="miter"/></svg>
<svg class="r" style="left:215px;top:141px" width="19" height="14" viewBox="0 0 19 14"><path d="M1 4h17M1 10h17" stroke="#3a70b8" stroke-width="2.6"/></svg>
<div class="r" style="left:249px;top:138px;width:827px;height:23px;background:#a8a8a8;"></div>
<div class="r" style="left:250px;top:139px;width:825px;height:21px;background:#ffffff;"></div>
<div class="r" style="left:1079px;top:139px;width:15px;height:21px;background:#b8b8b8;"></div>
<div class="r" style="left:1080px;top:140px;width:13px;height:19px;background:#dedede;"></div>
<svg class="r" style="left:1080px;top:146px" width="13" height="8" viewBox="0 0 13 8"><path d="M1 1h11l-5.5 6z" fill="#111"/></svg>
<div class="r" style="left:1107px;top:132px;width:40px;height:916px;background:#f0f0f0;"></div>
<svg class="r" style="left:1119px;top:145px" width="18" height="14" viewBox="0 0 18 14"><path d="M2 2h9M2 5h9M2 8h9" stroke="#444" stroke-width="1.2"/><path d="M8 10h8l-4 4z" fill="#222"/></svg>
<div class="r" style="left:1111px;top:171px;width:29px;height:1px;background:#dcdcdc;"></div>
<svg class="r" style="left:1111px;top:175px" width="32" height="32" viewBox="0 0 32 32"><rect x="0.5" y="0.5" width="31" height="31" rx="4" fill="#f4f4f4" stroke="#c8c8c8"/><path d="M8 9c0-3 3-5 6-4l-3 3 1 2 2 1 3-3c1 3-1 6-4 6l8 8c1 1 0 3-1 3l-8-8c-3 0-5-3-4-6z" fill="#fff" stroke="#777" stroke-width="1.2"/></svg>
<svg class="r" style="left:1113px;top:213px" width="30" height="30" viewBox="0 0 30 30"><path d="M2 26L24 4v22z" fill="#5fc030" stroke="#3a8a10"/><path d="M8 4h18v4h-6v18h-5V8h-7z" fill="#333" stroke="#111" stroke-width="0.5"/></svg>
<svg class="r" style="left:1114px;top:246px" width="28" height="26" viewBox="0 0 28 26"><path d="M14 2l-4 4M14 2l4 4" stroke="#555"/><rect x="1.5" y="5.5" width="25" height="18" rx="2" fill="#e89a30" stroke="#a8641a"/><rect x="4.5" y="8.5" width="19" height="12" fill="#f8d060"/><rect x="4.5" y="8.5" width="19" height="6" fill="#7ab0e0"/><path d="M14 20v-6l-3-3M14 14l3-4" stroke="#333"/></svg>
<svg class="r" style="left:1114px;top:283px" width="28" height="28" viewBox="0 0 28 28"><circle cx="14" cy="14" r="12" fill="#fff" stroke="#999" stroke-width="2.2"/><circle cx="14" cy="14" r="9" fill="#fafafa" stroke="#ccc"/><path d="M19 8l-4 7-2-1z" fill="#d03030"/><path d="M9 20l4-7 2 1z" fill="#3a6ad0"/></svg>
<svg class="r" style="left:1114px;top:318px" width="28" height="26" viewBox="0 0 28 26"><text x="2" y="22" font-family="Liberation Serif" font-style="italic" font-weight="bold" font-size="19" fill="#7a4aa0">fx</text><path d="M12 3l1 2 2 .3-1.5 1.4.4 2-1.9-1-1.9 1 .4-2L9 5.3 11 5z" fill="#f0d020"/><path d="M22 2l1 2 2 .3-1.5 1.4.4 2-1.9-1-1.9 1 .4-2L19 4.3 21 4z" fill="#f0d020"/><path d="M4 8l.8 1.6 1.7.2-1.2 1.1.3 1.7-1.6-.8-1.6.8.3-1.7L1.5 9.8l1.7-.2z" fill="#f0d020"/></svg>
<div class="r" style="left:41px;top:186px;width:1042px;height:770px;background:#ffffff;"></div>
<div class="r" style="left:41px;top:202px;width:1042px;height:1px;background:#c8c8c8;"></div>
<div class="r" style="left:41px;top:219px;width:1042px;height:1px;background:#c8c8c8;"></div>
<div class="r" style="left:41px;top:236px;width:1042px;height:1px;background:#c8c8c8;"></div>
<div class="r" style="left:41px;top:253px;width:1042px;height:1px;background:#c8c8c8;"></div>
<div class="r" style="left:41px;top:270px;width:1042px;height:1px;background:#c8c8c8;"></div>
<div class="r" style="left:41px;top:284px;width:1042px;height:1px;background:#c8c8c8;"></div>
<div class="r" style="left:41px;top:298px;width:1042px;height:1px;background:#c8c8c8;"></div>
<div class="r" style="left:41px;top:312px;width:1042px;height:1px;background:#c8c8c8;"></div>
<div class="r" style="left:41px;top:326px;width:1042px;height:1px;background:#c8c8c8;"></div>
<div class="r" style="left:41px;top:340px;width:1042px;height:1px;background:#c8c8c8;"></div>
<div class="r" style="left:41px;top:354px;width:1042px;height:1px;background:#c8c8c8;"></div>
<div class="r" style="left:41px;top:370px;width:1042px;height:1px;background:#c8c8c8;"></div>
<div class="r" style="left:41px;top:384px;width:1042px;height:1px;background:#c8c8c8;"></div>
<div class="r" style="left:41px;top:398px;width:1042px;height:1px;background:#c8c8c8;"></div>
<div class="r" style="left:41px;top:412px;width:1042px;height:1px;background:#c8c8c8;"></div>
<div class="r" style="left:41px;top:426px;width:1042px;height:1px;background:#c8c8c8;"></div>
<div class="r" style="left:41px;top:440px;width:1042px;height:1px;background:#c8c8c8;"></div>
<div class="r" style="left:41px;top:454px;width:1042px;height:1px;background:#c8c8c8;"></div>
<div class="r" style="left:41px;top:468px;width:1042px;height:1px;background:#c8c8c8;"></div>
<div class="r" style="left:41px;top:482px;width:1042px;height:1px;background:#c8c8c8;"></div>
<div class="r" style="left:41px;top:496px;width:1042px;height:1px;background:#c8c8c8;"></div>
<div class="r" style="left:41px;top:510px;width:1042px;height:1px;background:#c8c8c8;"></div>
<div class="r" style="left:41px;top:526px;width:1042px;height:1px;background:#c8c8c8;"></div>
<div class="r" style="left:41px;top:541px;width:1042px;height:1px;background:#c8c8c8;"></div>
<div class="r" style="left:41px;top:556px;width:1042px;height:1px;background:#c8c8c8;"></div>
<div class="r" style="left:41px;top:571px;width:1042px;height:1px;background:#c8c8c8;"></div>
<div class="r" style="left:41px;top:585px;width:1042px;height:1px;background:#c8c8c8;"></div>
<div class="r" style="left:41px;top:599px;width:1042px;height:1px;background:#c8c8c8;"></div>
<div class="r" style="left:41px;top:613px;width:1042px;height:1px;background:#c8c8c8;"></div>
<div class="r" style="left:41px;top:627px;width:1042px;height:1px;background:#c8c8c8;"></div>
<div class="r" style="left:41px;top:641px;width:1042px;height:1px;background:#c8c8c8;"></div>
<div class="r" style="left:41px;top:657px;width:1042px;height:1px;background:#c8c8c8;"></div>
<div class="r" style="left:41px;top:671px;width:1042px;height:1px;background:#c8c8c8;"></div>
<div class="r" style="left:41px;top:685px;width:1042px;height:1px;background:#c8c8c8;"></div>
<div class="r" style="left:41px;top:700px;width:1042px;height:1px;background:#c8c8c8;"></div>
<div class="r" style="left:41px;top:714px;width:1042px;height:1px;background:#c8c8c8;"></div>
<div class="r" style="left:41px;top:728px;width:1042px;height:1px;background:#c8c8c8;"></div>
<div class="r" style="left:41px;top:742px;width:1042px;height:1px;background:#c8c8c8;"></div>
<div class="r" style="left:41px;top:756px;width:1042px;height:1px;background:#c8c8c8;"></div>
<div class="r" style="left:41px;top:770px;width:1042px;height:1px;background:#c8c8c8;"></div>
<div class="r" style="left:41px;top:784px;width:1042px;height:1px;background:#c8c8c8;"></div>
<div class="r" style="left:41px;top:798px;width:1042px;height:1px;background:#c8c8c8;"></div>
<div class="r" style="left:41px;top:812px;width:1042px;height:1px;background:#c8c8c8;"></div>
<div class="r" style="left:41px;top:826px;width:1042px;height:1px;background:#c8c8c8;"></div>
<div class="r" style="left:41px;top:840px;width:1042px;height:1px;background:#c8c8c8;"></div>
<div class="r" style="left:41px;top:854px;width:1042px;height:1px;background:#c8c8c8;"></div>
<div class="r" style="left:41px;top:868px;width:1042px;height:1px;background:#c8c8c8;"></div>
<div class="r" style="left:41px;top:882px;width:1042px;height:1px;background:#c8c8c8;"></div>
<div class="r" style="left:41px;top:896px;width:1042px;height:1px;background:#c8c8c8;"></div>
<div class="r" style="left:41px;top:910px;width:1042px;height:1px;background:#c8c8c8;"></div>
<div class="r" style="left:41px;top:924px;width:1042px;height:1px;background:#c8c8c8;"></div>
<div class="r" style="left:41px;top:938px;width:1042px;height:1px;background:#c8c8c8;"></div>
<div class="r" style="left:41px;top:952px;width:1042px;height:1px;background:#c8c8c8;"></div>
<div class="r" style="left:190px;top:186px;width:1px;height:770px;background:#c8c8c8;"></div>
<div class="r" style="left:227px;top:186px;width:1px;height:770px;background:#c8c8c8;"></div>
<div class="r" style="left:270px;top:186px;width:1px;height:770px;background:#c8c8c8;"></div>
<div class="r" style="left:331px;top:186px;width:1px;height:770px;background:#c8c8c8;"></div>
<div class="r" style="left:356px;top:186px;width:1px;height:770px;background:#c8c8c8;"></div>
<div class="r" style="left:613px;top:186px;width:1px;height:770px;background:#c8c8c8;"></div>
<div class="r" style="left:652px;top:186px;width:1px;height:770px;background:#c8c8c8;"></div>
<div class="r" style="left:698px;top:186px;width:1px;height:770px;background:#c8c8c8;"></div>
<div class="r" style="left:718px;top:186px;width:1px;height:770px;background:#c8c8c8;"></div>
<div class="r" style="left:880px;top:186px;width:1px;height:770px;background:#c8c8c8;"></div>
<div class="r" style="left:939px;top:186px;width:1px;height:770px;background:#c8c8c8;"></div>
<div class="r" style="left:994px;top:186px;width:1px;height:770px;background:#c8c8c8;"></div>
<div class="r" style="left:1042px;top:186px;width:1px;height:770px;background:#c8c8c8;"></div>
<div class="r" style="left:1079px;top:186px;width:1px;height:770px;background:#c8c8c8;"></div>
<div class="r" style="left:271px;top:220px;width:61px;height:17px;background:#ffcc00;"></div>
<div class="r" style="left:270px;top:219px;width:62px;height:1px;background:#000;"></div>
<div class="r" style="left:270px;top:236px;width:62px;height:1px;background:#000;"></div>
<div class="r" style="left:270px;top:219px;width:1px;height:18px;background:#000;"></div>
<div class="r" style="left:331px;top:219px;width:1px;height:18px;background:#000;"></div>
<div class="r" style="left:41px;top:254px;width:230px;height:17px;background:#00ff00;"></div>
<div class="r" style="left:357px;top:254px;width:296px;height:17px;background:#00ff00;"></div>
<div class="r" style="left:719px;top:254px;width:221px;height:17px;background:#00ff00;"></div>
<div class="r" style="left:228px;top:285px;width:43px;height:14px;background:#ffcc00;"></div>
<div class="r" style="left:228px;top:299px;width:43px;height:14px;background:#ffcc00;"></div>
<div class="r" style="left:228px;top:327px;width:43px;height:14px;background:#ffcc00;"></div>
<div class="r" style="left:228px;top:355px;width:43px;height:16px;background:#ffcc00;"></div>
<div class="r" style="left:40px;top:284px;width:231px;height:1px;background:#000;"></div>
<div class="r" style="left:40px;top:370px;width:231px;height:1px;background:#000;"></div>
<div class="r" style="left:40px;top:284px;width:1px;height:87px;background:#000;"></div>
<div class="r" style="left:270px;top:284px;width:1px;height:87px;background:#000;"></div>
<div class="r" style="left:41px;top:385px;width:230px;height:14px;background:#00ff00;"></div>
<div class="r" style="left:228px;top:399px;width:43px;height:14px;background:#ffcc00;"></div>
<div class="r" style="left:228px;top:413px;width:43px;height:14px;background:#ffcc00;"></div>
<div class="r" style="left:228px;top:427px;width:43px;height:14px;background:#ffcc00;"></div>
<div class="r" style="left:40px;top:398px;width:231px;height:1px;background:#000;"></div>
<div class="r" style="left:40px;top:454px;width:231px;height:1px;background:#000;"></div>
<div class="r" style="left:40px;top:398px;width:1px;height:57px;background:#000;"></div>
<div class="r" style="left:270px;top:398px;width:1px;height:57px;background:#000;"></div>
<div class="r" style="left:190px;top:440px;width:1px;height:15px;background:#000;"></div>
<div class="r" style="left:40px;top:482px;width:292px;height:1px;background:#000;"></div>
<div class="r" style="left:40px;top:526px;width:292px;height:1px;background:#000;"></div>
<div class="r" style="left:40px;top:482px;width:1px;height:45px;background:#000;"></div>
<div class="r" style="left:331px;top:482px;width:1px;height:45px;background:#000;"></div>
<div class="r" style="left:43px;top:497px;width:265px;height:12px;background:#c0c0c0;"></div>
<div class="r" style="left:41px;top:542px;width:187px;height:15px;background:#00ff00;"></div>
<div class="r" style="left:41px;top:557px;width:187px;height:15px;background:#ffff00;"></div>
<div class="r" style="left:41px;top:572px;width:187px;height:14px;background:#ffff00;"></div>
<div class="r" style="left:41px;top:586px;width:187px;height:14px;background:#ffff00;"></div>
<div class="r" style="left:41px;top:600px;width:187px;height:14px;background:#ffff00;"></div>
<div class="r" style="left:41px;top:614px;width:187px;height:14px;background:#ffff00;"></div>
<div class="r" style="left:41px;top:628px;width:187px;height:14px;background:#ffff00;"></div>
<div class="r" style="left:41px;top:642px;width:187px;height:16px;background:#ffff00;"></div>
<div class="r" style="left:41px;top:658px;width:187px;height:14px;background:#ffff00;"></div>
<div class="r" style="left:41px;top:672px;width:187px;height:14px;background:#ffff00;"></div>
<div class="r" style="left:40px;top:556px;width:188px;height:1px;background:#000;"></div>
<div class="r" style="left:40px;top:571px;width:188px;height:1px;background:#000;"></div>
<div class="r" style="left:40px;top:585px;width:188px;height:1px;background:#000;"></div>
<div class="r" style="left:40px;top:599px;width:188px;height:1px;background:#000;"></div>
<div class="r" style="left:40px;top:613px;width:188px;height:1px;background:#000;"></div>
<div class="r" style="left:40px;top:627px;width:188px;height:1px;background:#000;"></div>
<div class="r" style="left:40px;top:641px;width:188px;height:1px;background:#000;"></div>
<div class="r" style="left:40px;top:657px;width:188px;height:1px;background:#000;"></div>
<div class="r" style="left:40px;top:671px;width:188px;height:1px;background:#000;"></div>
<div class="r" style="left:40px;top:541px;width:188px;height:2px;background:#000;"></div>
<div class="r" style="left:40px;top:685px;width:188px;height:2px;background:#000;"></div>
<div class="r" style="left:40px;top:541px;width:2px;height:146px;background:#000;"></div>
<div class="r" style="left:226px;top:541px;width:2px;height:146px;background:#000;"></div>
<div class="r" style="left:40px;top:556px;width:188px;height:2px;background:#000;"></div>
<div class="r" style="left:41px;top:701px;width:187px;height:14px;background:#40e83a;"></div>
<div class="r" style="left:40px;top:714px;width:231px;height:1px;background:#000;"></div>
<div class="r" style="left:40px;top:784px;width:231px;height:1px;background:#000;"></div>
<div class="r" style="left:40px;top:714px;width:1px;height:71px;background:#000;"></div>
<div class="r" style="left:270px;top:714px;width:1px;height:71px;background:#000;"></div>
<div class="r" style="left:190px;top:714px;width:1px;height:71px;background:#000;"></div>
<div class="r" style="left:41px;top:883px;width:150px;height:14px;background:#40e83a;"></div>
<div class="r" style="left:614px;top:285px;width:39px;height:14px;background:#ffcc00;"></div>
<div class="r" style="left:356px;top:284px;width:297px;height:1px;background:#000;"></div>
<div class="r" style="left:356px;top:340px;width:297px;height:1px;background:#000;"></div>
<div class="r" style="left:356px;top:284px;width:1px;height:57px;background:#000;"></div>
<div class="r" style="left:652px;top:284px;width:1px;height:57px;background:#000;"></div>
<div class="r" style="left:614px;top:355px;width:39px;height:30px;background:#ffcc00;"></div>
<div class="r" style="left:356px;top:354px;width:297px;height:1px;background:#000;"></div>
<div class="r" style="left:356px;top:426px;width:297px;height:1px;background:#000;"></div>
<div class="r" style="left:356px;top:354px;width:1px;height:73px;background:#000;"></div>
<div class="r" style="left:652px;top:354px;width:1px;height:73px;background:#000;"></div>
<div class="r" style="left:614px;top:441px;width:39px;height:28px;background:#ffcc00;"></div>
<div class="r" style="left:356px;top:440px;width:297px;height:1px;background:#000;"></div>
<div class="r" style="left:356px;top:468px;width:297px;height:1px;background:#000;"></div>
<div class="r" style="left:356px;top:440px;width:1px;height:29px;background:#000;"></div>
<div class="r" style="left:652px;top:440px;width:1px;height:29px;background:#000;"></div>
<div class="r" style="left:614px;top:483px;width:39px;height:59px;background:#ffcc00;"></div>
<div class="r" style="left:356px;top:482px;width:297px;height:1px;background:#000;"></div>
<div class="r" style="left:356px;top:627px;width:297px;height:1px;background:#000;"></div>
<div class="r" style="left:356px;top:482px;width:1px;height:146px;background:#000;"></div>
<div class="r" style="left:652px;top:482px;width:1px;height:146px;background:#000;"></div>
<div class="r" style="left:614px;top:642px;width:39px;height:16px;background:#ffcc00;"></div>
<div class="r" style="left:356px;top:641px;width:297px;height:1px;background:#000;"></div>
<div class="r" style="left:356px;top:700px;width:297px;height:1px;background:#000;"></div>
<div class="r" style="left:356px;top:641px;width:1px;height:60px;background:#000;"></div>
<div class="r" style="left:652px;top:641px;width:1px;height:60px;background:#000;"></div>
<div class="r" style="left:614px;top:715px;width:39px;height:56px;background:#ffcc00;"></div>
<div class="r" style="left:356px;top:714px;width:297px;height:1px;background:#000;"></div>
<div class="r" style="left:356px;top:840px;width:297px;height:1px;background:#000;"></div>
<div class="r" style="left:356px;top:714px;width:1px;height:127px;background:#000;"></div>
<div class="r" style="left:652px;top:714px;width:1px;height:127px;background:#000;"></div>
<div class="r" style="left:881px;top:271px;width:59px;height:14px;background:#ffcc00;"></div>
<div class="r" style="left:881px;top:355px;width:59px;height:30px;background:#ffcc00;"></div>
<div class="r" style="left:718px;top:270px;width:222px;height:1px;background:#000;"></div>
<div class="r" style="left:718px;top:398px;width:222px;height:1px;background:#000;"></div>
<div class="r" style="left:718px;top:270px;width:1px;height:129px;background:#000;"></div>
<div class="r" style="left:939px;top:270px;width:1px;height:129px;background:#000;"></div>
<div class="r" style="left:881px;top:413px;width:59px;height:28px;background:#ffcc00;"></div>
<div class="r" style="left:718px;top:412px;width:222px;height:1px;background:#000;"></div>
<div class="r" style="left:718px;top:454px;width:222px;height:1px;background:#000;"></div>
<div class="r" style="left:718px;top:412px;width:1px;height:43px;background:#000;"></div>
<div class="r" style="left:939px;top:412px;width:1px;height:43px;background:#000;"></div>
<div class="r" style="left:718px;top:468px;width:222px;height:1px;background:#000;"></div>
<div class="r" style="left:718px;top:482px;width:222px;height:1px;background:#000;"></div>
<div class="r" style="left:718px;top:468px;width:1px;height:15px;background:#000;"></div>
<div class="r" style="left:939px;top:468px;width:1px;height:15px;background:#000;"></div>
<div class="r" style="left:719px;top:497px;width:221px;height:14px;background:#00ff00;"></div>
<div class="r" style="left:881px;top:511px;width:59px;height:46px;background:#ffcc00;"></div>
<div class="r" style="left:718px;top:510px;width:222px;height:1px;background:#000;"></div>
<div class="r" style="left:718px;top:556px;width:222px;height:1px;background:#000;"></div>
<div class="r" style="left:718px;top:510px;width:1px;height:47px;background:#000;"></div>
<div class="r" style="left:939px;top:510px;width:1px;height:47px;background:#000;"></div>
<div class="r" style="left:718px;top:571px;width:222px;height:1px;background:#000;"></div>
<div class="r" style="left:718px;top:599px;width:222px;height:1px;background:#000;"></div>
<div class="r" style="left:718px;top:571px;width:1px;height:29px;background:#000;"></div>
<div class="r" style="left:939px;top:571px;width:1px;height:29px;background:#000;"></div>
<div class="r" style="left:718px;top:613px;width:222px;height:1px;background:#000;"></div>
<div class="r" style="left:718px;top:627px;width:222px;height:1px;background:#000;"></div>
<div class="r" style="left:718px;top:613px;width:1px;height:15px;background:#000;"></div>
<div class="r" style="left:939px;top:613px;width:1px;height:15px;background:#000;"></div>
<div class="r" style="left:718px;top:671px;width:222px;height:1px;background:#000;"></div>
<div class="r" style="left:718px;top:798px;width:222px;height:1px;background:#000;"></div>
<div class="r" style="left:718px;top:671px;width:1px;height:128px;background:#000;"></div>
<div class="r" style="left:939px;top:671px;width:1px;height:128px;background:#000;"></div>
<div class="r" style="left:1043px;top:586px;width:36px;height:27px;background:#cfe2fa;"></div>
<div class="r" style="left:1042px;top:599px;width:1px;height:14px;background:#3d97f5;"></div>
<div class="r" style="left:1079px;top:599px;width:1px;height:14px;background:#3d97f5;"></div>
<div class="r" style="left:1042px;top:613px;width:38px;height:1px;background:#3d97f5;"></div>
<div class="r" style="left:1042px;top:585px;width:38px;height:2px;background:#000;"></div>
<div class="r" style="left:1042px;top:598px;width:38px;height:2px;background:#000;"></div>
<div class="r" style="left:1042px;top:585px;width:2px;height:15px;background:#000;"></div>
<div class="r" style="left:1078px;top:585px;width:2px;height:15px;background:#000;"></div>
<div class="r" style="left:1077px;top:611px;width:5px;height:5px;background:#000;"></div>
<div class="r" style="left:262px;top:299px;width:7px;height:8px;background:#ffffff;"></div>
<div class="r" style="left:263px;top:300px;width:5px;height:6px;background:#f00000;"></div>
<div class="r" style="left:262px;top:341px;width:7px;height:8px;background:#ffffff;"></div>
<div class="r" style="left:263px;top:342px;width:5px;height:6px;background:#f00000;"></div>
<div class="r" style="left:262px;top:413px;width:7px;height:8px;background:#ffffff;"></div>
<div class="r" style="left:263px;top:414px;width:5px;height:6px;background:#f00000;"></div>
<div class="r" style="left:262px;top:427px;width:7px;height:8px;background:#ffffff;"></div>
<div class="r" style="left:263px;top:428px;width:5px;height:6px;background:#f00000;"></div>
<div class="r" style="left:262px;top:441px;width:7px;height:8px;background:#ffffff;"></div>
<div class="r" style="left:263px;top:442px;width:5px;height:6px;background:#f00000;"></div>
<div class="r" style="left:644px;top:299px;width:7px;height:8px;background:#ffffff;"></div>
<div class="r" style="left:645px;top:300px;width:5px;height:6px;background:#f00000;"></div>
<div class="r" style="left:644px;top:441px;width:7px;height:8px;background:#ffffff;"></div>
<div class="r" style="left:645px;top:442px;width:5px;height:6px;background:#f00000;"></div>
<div class="r" style="left:644px;top:455px;width:7px;height:8px;background:#ffffff;"></div>
<div class="r" style="left:645px;top:456px;width:5px;height:6px;background:#f00000;"></div>
<div class="r" style="left:644px;top:483px;width:7px;height:8px;background:#ffffff;"></div>
<div class="r" style="left:645px;top:484px;width:5px;height:6px;background:#f00000;"></div>
<div class="r" style="left:644px;top:511px;width:7px;height:8px;background:#ffffff;"></div>
<div class="r" style="left:645px;top:512px;width:5px;height:6px;background:#f00000;"></div>
<div class="r" style="left:644px;top:527px;width:7px;height:8px;background:#ffffff;"></div>
<div class="r" style="left:645px;top:528px;width:5px;height:6px;background:#f00000;"></div>
<div class="r" style="left:644px;top:715px;width:7px;height:8px;background:#ffffff;"></div>
<div class="r" style="left:645px;top:716px;width:5px;height:6px;background:#f00000;"></div>
<div class="r" style="left:644px;top:729px;width:7px;height:8px;background:#ffffff;"></div>
<div class="r" style="left:645px;top:730px;width:5px;height:6px;background:#f00000;"></div>
<div class="r" style="left:644px;top:771px;width:7px;height:8px;background:#ffffff;"></div>
<div class="r" style="left:645px;top:772px;width:5px;height:6px;background:#f00000;"></div>
<div class="r" style="left:644px;top:785px;width:7px;height:8px;background:#ffffff;"></div>
<div class="r" style="left:645px;top:786px;width:5px;height:6px;background:#f00000;"></div>
<div class="r" style="left:644px;top:799px;width:7px;height:8px;background:#ffffff;"></div>
<div class="r" style="left:645px;top:800px;width:5px;height:6px;background:#f00000;"></div>
<div class="r" style="left:644px;top:813px;width:7px;height:8px;background:#ffffff;"></div>
<div class="r" style="left:645px;top:814px;width:5px;height:6px;background:#f00000;"></div>
<div class="r" style="left:644px;top:827px;width:7px;height:8px;background:#ffffff;"></div>
<div class="r" style="left:645px;top:828px;width:5px;height:6px;background:#f00000;"></div>
<div class="r" style="left:931px;top:285px;width:7px;height:8px;background:#ffffff;"></div>
<div class="r" style="left:932px;top:286px;width:5px;height:6px;background:#f00000;"></div>
<div class="r" style="left:931px;top:299px;width:7px;height:8px;background:#ffffff;"></div>
<div class="r" style="left:932px;top:300px;width:5px;height:6px;background:#f00000;"></div>
<div class="r" style="left:931px;top:313px;width:7px;height:8px;background:#ffffff;"></div>
<div class="r" style="left:932px;top:314px;width:5px;height:6px;background:#f00000;"></div>
<div class="r" style="left:931px;top:327px;width:7px;height:8px;background:#ffffff;"></div>
<div class="r" style="left:932px;top:328px;width:5px;height:6px;background:#f00000;"></div>
<div class="r" style="left:931px;top:341px;width:7px;height:8px;background:#ffffff;"></div>
<div class="r" style="left:932px;top:342px;width:5px;height:6px;background:#f00000;"></div>
<div class="r" style="left:931px;top:355px;width:7px;height:8px;background:#ffffff;"></div>
<div class="r" style="left:932px;top:356px;width:5px;height:6px;background:#f00000;"></div>
<div class="r" style="left:931px;top:371px;width:7px;height:8px;background:#ffffff;"></div>
<div class="r" style="left:932px;top:372px;width:5px;height:6px;background:#f00000;"></div>
<div class="r" style="left:931px;top:385px;width:7px;height:8px;background:#ffffff;"></div>
<div class="r" style="left:932px;top:386px;width:5px;height:6px;background:#f00000;"></div>
<div class="r" style="left:931px;top:469px;width:7px;height:8px;background:#ffffff;"></div>
<div class="r" style="left:932px;top:470px;width:5px;height:6px;background:#f00000;"></div>
<div class="r" style="left:931px;top:527px;width:7px;height:8px;background:#ffffff;"></div>
<div class="r" style="left:932px;top:528px;width:5px;height:6px;background:#f00000;"></div>
<div class="r" style="left:931px;top:542px;width:7px;height:8px;background:#ffffff;"></div>
<div class="r" style="left:932px;top:543px;width:5px;height:6px;background:#f00000;"></div>
<div class="r" style="left:931px;top:572px;width:7px;height:8px;background:#ffffff;"></div>
<div class="r" style="left:932px;top:573px;width:5px;height:6px;background:#f00000;"></div>
<div class="r" style="left:931px;top:614px;width:7px;height:8px;background:#ffffff;"></div>
<div class="r" style="left:932px;top:615px;width:5px;height:6px;background:#f00000;"></div>
<div class="t" style="left:44.00px;top:185.73px;font-size:14.5px;color:#dc0000;font-weight:bold;transform-origin:left top;transform: scaleX(0.9967);">SIMSPEC V4.2 <span class="w">english<svg><rect width="100%" height="4" fill="url(#wv)"/></svg></span> <span class="w">version,<svg><rect width="100%" height="4" fill="url(#wv)"/></svg></span> <span class="w">by<svg><rect width="100%" height="4" fill="url(#wv)"/></svg></span> Ken Harrison ,</div>
<div class="t" style="left:385.50px;top:189.41px;font-size:11.33px;color:#dc0000;font-weight:bold;transform-origin:left top;transform: scaleX(0.9962);"><span class="w">original<svg><rect width="100%" height="4" fill="url(#wv)"/></svg></span> <span class="w">version<svg><rect width="100%" height="4" fill="url(#wv)"/></svg></span> <span class="w">by<svg><rect width="100%" height="4" fill="url(#wv)"/></svg></span>  Christian Buil</div>
<div class="t" style="right:277.00px;top:189.41px;font-size:11.33px;color:#dc0000;font-weight:bold;transform-origin:right top;transform: scaleX(1.0090);"><span class="w">Latest<svg><rect width="100%" height="4" fill="url(#wv)"/></svg></span> <span class="w">Revision:<svg><rect width="100%" height="4" fill="url(#wv)"/></svg></span></div>
<div class="t" style="right:218.00px;top:189.41px;font-size:11.33px;color:#dc0000;font-weight:bold;transform-origin:right top;transform: scaleX(0.9870);">03-16</div>
<div class="t" style="left:44.00px;top:219.73px;font-size:14.5px;color:#000;font-weight:bold;transform-origin:left top;transform: scaleX(1.0133);">Enter data in <span class="w">highlighted<svg><rect width="100%" height="4" fill="url(#wv)"/></svg></span> <span class="w">cells<svg><rect width="100%" height="4" fill="url(#wv)"/></svg></span></div>
<div class="t" style="left:113.00px;top:253.73px;font-size:14.5px;color:#0000d8;font-weight:bold;transform-origin:center top;transform:translateX(-50%) scaleX(1.0165);"><span class="w">Telescope<svg><rect width="100%" height="4" fill="url(#wv)"/></svg></span></div>
<div class="t" style="left:485.50px;top:253.73px;font-size:14.5px;color:#0000d8;font-weight:bold;transform-origin:center top;transform:translateX(-50%) scaleX(1.0184);"><span class="w">Spectrograph<svg><rect width="100%" height="4" fill="url(#wv)"/></svg></span></div>
<div class="t" style="left:797.50px;top:253.73px;font-size:14.5px;color:#0000d8;font-weight:bold;transform-origin:center top;transform:translateX(-50%) scaleX(0.9962);">Camera</div>
<div class="t" style="left:43.00px;top:285.41px;font-size:11.33px;color:#000;font-weight:bold;transform-origin:left top;transform: scaleX(0.9961);">Diameter (D) :</div>
<div class="t" style="right:887.00px;top:285.41px;font-size:11.33px;color:#000;font-weight:bold;">200</div>
<div class="t" style="left:273.00px;top:285.11px;font-size:10.5px;color:#000;">mm</div>
<div class="t" style="left:43.00px;top:299.41px;font-size:11.33px;color:#000;font-weight:bold;transform-origin:left top;transform: scaleX(0.9395);"><span class="w">Focal<svg><rect width="100%" height="4" fill="url(#wv)"/></svg></span> Ratio, F/D (F#) :</div>
<div class="t" style="right:887.00px;top:299.41px;font-size:11.33px;color:#000;font-weight:bold;">6,0</div>
<div class="t" style="right:969.00px;top:313.11px;font-size:10.5px;color:#dc0000;transform-origin:right top;transform: scaleX(1.0176);"><span class="w">Focal<svg><rect width="100%" height="4" fill="url(#wv)"/></svg></span> <span class="w">length<svg><rect width="100%" height="4" fill="url(#wv)"/></svg></span> (f) :</div>
<div class="t" style="right:887.00px;top:313.11px;font-size:10.5px;color:#dc0000;">1200</div>
<div class="t" style="left:273.00px;top:313.11px;font-size:10.5px;color:#000;">mm</div>
<div class="t" style="left:43.00px;top:327.01px;font-size:11.8px;color:#000;font-weight:bold;transform-origin:left top;transform: scaleX(0.9744);"><span class="w">Secondary<svg><rect width="100%" height="4" fill="url(#wv)"/></svg></span> Diameter</div>
<div class="t" style="right:887.00px;top:327.41px;font-size:11.33px;color:#000;font-weight:bold;">165</div>
<div class="t" style="left:273.00px;top:327.11px;font-size:10.5px;color:#000;">mm</div>
<div class="t" style="left:43.00px;top:341.11px;font-size:10.5px;color:#000;transform-origin:left top;transform: scaleX(1.0317);"><span class="w">Central<svg><rect width="100%" height="4" fill="url(#wv)"/></svg></span> <span class="w">obstruction<svg><rect width="100%" height="4" fill="url(#wv)"/></svg></span> (ε) :</div>
<div class="t" style="right:887.00px;top:341.11px;font-size:10.5px;color:#000;">0,85</div>
<div class="t" style="left:43.00px;top:357.01px;font-size:11.8px;color:#000;font-weight:bold;transform-origin:left top;transform: scaleX(0.9851);"><span class="w">Telescope<svg><rect width="100%" height="4" fill="url(#wv)"/></svg></span> <span class="w">throughput<svg><rect width="100%" height="4" fill="url(#wv)"/></svg></span> (To) :</div>
<div class="t" style="right:887.00px;top:357.41px;font-size:11.33px;color:#000;font-weight:bold;">0,95</div>
<div class="t" style="left:115.50px;top:385.41px;font-size:11.33px;color:#0000d8;font-weight:bold;transform-origin:center top;transform:translateX(-50%) scaleX(1.0355);"><span class="w">Seeing/<svg><rect width="100%" height="4" fill="url(#wv)"/></svg></span> <span class="w">Atmosphere<svg><rect width="100%" height="4" fill="url(#wv)"/></svg></span></div>
<div class="t" style="left:43.00px;top:399.41px;font-size:11.33px;color:#000;font-weight:bold;transform-origin:left top;transform: scaleX(0.9770);"><span class="w">Seeing<svg><rect width="100%" height="4" fill="url(#wv)"/></svg></span> (ϕ) :</div>
<div class="t" style="right:887.00px;top:399.41px;font-size:11.33px;color:#000;font-weight:bold;">4</div>
<div class="t" style="left:273.00px;top:401.11px;font-size:10.5px;color:#000;">"</div>
<div class="t" style="left:43.00px;top:413.41px;font-size:11.33px;color:#000;font-weight:bold;transform-origin:left top;transform: scaleX(1.0329);"><span class="w">Atmospheric<svg><rect width="100%" height="4" fill="url(#wv)"/></svg></span> <span class="w">transmission<svg><rect width="100%" height="4" fill="url(#wv)"/></svg></span> (Ta) :</div>
<div class="t" style="right:887.00px;top:413.41px;font-size:11.33px;color:#000;font-weight:bold;">0,8</div>
<div class="t" style="left:43.00px;top:427.41px;font-size:11.33px;color:#000;font-weight:bold;transform-origin:left top;transform: scaleX(1.0112);">Sky magnitude (mag/<span class="w">arc<svg><rect width="100%" height="4" fill="url(#wv)"/></svg></span> sec^2) :</div>
<div class="t" style="right:887.00px;top:427.41px;font-size:11.33px;color:#000;font-weight:bold;">17</div>
<div class="t" style="right:930.00px;top:441.41px;font-size:11.33px;color:#dc0000;font-weight:bold;transform-origin:right top;transform: scaleX(0.9896);">Star size at focus (FWHM):</div>
<div class="t" style="right:887.00px;top:441.41px;font-size:11.33px;color:#dc0000;font-weight:bold;">23,5</div>
<div class="t" style="left:273.00px;top:441.11px;font-size:10.5px;color:#000;">microns</div>
<div class="t" style="left:43.00px;top:469.41px;font-size:11.33px;color:#0000d8;font-weight:bold;transform-origin:left top;transform: scaleX(0.8995);">NOTES:</div>
<div class="t" style="left:43.00px;top:483.11px;font-size:10.5px;color:#000;transform-origin:left top;transform: scaleX(1.0726);"><span class="w">See<svg><rect width="100%" height="4" fill="url(#wv)"/></svg></span> <span class="w">www.astrosurf.org/buil/us<svg><rect width="100%" height="4" fill="url(#wv)"/></svg></span>/spe2/hresol1.htm</div>
<div class="t" style="left:43.00px;top:497.11px;font-size:10.5px;color:#0000d8;text-decoration:underline;transform-origin:left top;transform: scaleX(1.0710);">www.astrosurf.org/buil/us/stage/calcul/design_us.htm</div>
<div class="t" style="left:43.00px;top:513.11px;font-size:10.5px;color:#000;transform-origin:left top;transform: scaleX(1.0493);"> (explanatory notes and worked example)</div>
<div class="t" style="left:115.50px;top:543.41px;font-size:11.33px;color:#0000d8;font-weight:bold;transform-origin:center top;transform:translateX(-50%) scaleX(0.9464);">SUMMARY</div>
<div class="t" style="left:43.00px;top:558.41px;font-size:11.33px;color:#000;font-weight:bold;transform-origin:left top;transform: scaleX(1.0158);"><span class="w">Resolving<svg><rect width="100%" height="4" fill="url(#wv)"/></svg></span> power R</div>
<div class="t" style="right:930.50px;top:558.41px;font-size:11.33px;color:#000;font-weight:bold;">808</div>
<div class="t" style="left:43.00px;top:572.41px;font-size:11.33px;color:#000;font-weight:bold;transform-origin:left top;transform: scaleX(1.0232);"><span class="w">Spectral<svg><rect width="100%" height="4" fill="url(#wv)"/></svg></span> <span class="w">resolution<svg><rect width="100%" height="4" fill="url(#wv)"/></svg></span></div>
<div class="t" style="right:930.50px;top:572.41px;font-size:11.33px;color:#000;font-weight:bold;">8,12</div>
<div class="t" style="left:230.00px;top:572.11px;font-size:10.5px;color:#000;">Å</div>
<div class="t" style="left:43.00px;top:586.41px;font-size:11.33px;color:#000;font-weight:bold;transform-origin:left top;transform: scaleX(1.0179);"><span class="w">Wavelength<svg><rect width="100%" height="4" fill="url(#wv)"/></svg></span> range</div>
<div class="t" style="right:930.50px;top:586.41px;font-size:11.33px;color:#000;font-weight:bold;">3682</div>
<div class="t" style="left:230.00px;top:586.11px;font-size:10.5px;color:#000;">Å</div>
<div class="t" style="left:43.00px;top:600.41px;font-size:11.33px;color:#000;font-weight:bold;transform-origin:left top;transform: scaleX(1.0250);"><span class="w">Grating-Lines/<svg><rect width="100%" height="4" fill="url(#wv)"/></svg></span> mm</div>
<div class="t" style="right:930.50px;top:600.41px;font-size:11.33px;color:#000;font-weight:bold;">600</div>
<div class="t" style="left:43.00px;top:614.41px;font-size:11.33px;color:#000;font-weight:bold;transform-origin:left top;transform: scaleX(1.0089);"><span class="w">Grating-Diffraction<svg><rect width="100%" height="4" fill="url(#wv)"/></svg></span> order</div>
<div class="t" style="right:930.50px;top:614.41px;font-size:11.33px;color:#000;font-weight:bold;">1</div>
<div class="t" style="left:43.00px;top:628.41px;font-size:11.33px;color:#000;font-weight:bold;transform-origin:left top;transform: scaleX(1.0169);"><span class="w">Slit<svg><rect width="100%" height="4" fill="url(#wv)"/></svg></span> <span class="w">width<svg><rect width="100%" height="4" fill="url(#wv)"/></svg></span></div>
<div class="t" style="right:930.50px;top:628.41px;font-size:11.33px;color:#000;font-weight:bold;">25</div>
<div class="t" style="left:230.00px;top:628.11px;font-size:10.5px;color:#000;">microns</div>
<div class="t" style="left:43.00px;top:644.41px;font-size:11.33px;color:#000;font-weight:bold;transform-origin:left top;transform: scaleX(1.0296);">Target Mag.</div>
<div class="t" style="right:930.50px;top:644.41px;font-size:11.33px;color:#000;font-weight:bold;">9,0</div>
<div class="t" style="left:43.00px;top:658.41px;font-size:11.33px;color:#000;font-weight:bold;transform-origin:left top;transform: scaleX(0.9698);"><span class="w">Signal/Noise<svg><rect width="100%" height="4" fill="url(#wv)"/></svg></span> (SNR/pixel)</div>
<div class="t" style="right:930.50px;top:658.41px;font-size:11.33px;color:#000;font-weight:bold;">167</div>
<div class="t" style="left:43.00px;top:672.41px;font-size:11.33px;color:#000;font-weight:bold;transform-origin:left top;transform: scaleX(0.9783);"><span class="w">Signal/Noise<svg><rect width="100%" height="4" fill="url(#wv)"/></svg></span> (SNR/Δλ)</div>
<div class="t" style="right:930.50px;top:672.41px;font-size:11.33px;color:#000;font-weight:bold;">294</div>
<div class="t" style="left:115.00px;top:701.41px;font-size:11.33px;color:#0000d8;font-weight:bold;transform-origin:center top;transform:translateX(-50%) scaleX(1.0163);"><span class="w">Other<svg><rect width="100%" height="4" fill="url(#wv)"/></svg></span> <span class="w">Results<svg><rect width="100%" height="4" fill="url(#wv)"/></svg></span></div>
<div class="t" style="right:930.00px;top:715.11px;font-size:10.5px;color:#dc0000;transform-origin:right top;transform: scaleX(1.0602);"><span class="w">Angle<svg><rect width="100%" height="4" fill="url(#wv)"/></svg></span> of <span class="w">incidence<svg><rect width="100%" height="4" fill="url(#wv)"/></svg></span> (α) :</div>
<div class="t" style="right:887.00px;top:715.11px;font-size:10.5px;color:#dc0000;">34,80</div>
<div class="t" style="left:273.00px;top:712.11px;font-size:10.5px;color:#000;">°</div>
<div class="t" style="right:930.00px;top:729.11px;font-size:10.5px;color:#dc0000;transform-origin:right top;transform: scaleX(1.0832);"><span class="w">Angle<svg><rect width="100%" height="4" fill="url(#wv)"/></svg></span> of <span class="w">diffraction<svg><rect width="100%" height="4" fill="url(#wv)"/></svg></span> (<span class="w">β<svg><rect width="100%" height="4" fill="url(#wv)"/></svg></span>) :</div>
<div class="t" style="right:887.00px;top:729.11px;font-size:10.5px;color:#dc0000;">-10,20</div>
<div class="t" style="left:273.00px;top:726.11px;font-size:10.5px;color:#000;">°</div>
<div class="t" style="right:930.00px;top:743.11px;font-size:10.5px;color:#dc0000;transform-origin:right top;transform: scaleX(1.0685);"><span class="w">Anamorphic<svg><rect width="100%" height="4" fill="url(#wv)"/></svg></span> <span class="w">factor<svg><rect width="100%" height="4" fill="url(#wv)"/></svg></span> (<span class="w">r<svg><rect width="100%" height="4" fill="url(#wv)"/></svg></span>) :</div>
<div class="t" style="right:887.00px;top:743.11px;font-size:10.5px;color:#dc0000;">0,83</div>
<div class="t" style="right:930.00px;top:757.11px;font-size:10.5px;color:#dc0000;transform-origin:right top;transform: scaleX(1.0151);"><span class="w">diffraction<svg><rect width="100%" height="4" fill="url(#wv)"/></svg></span> limit <span class="w">grating,<svg><rect width="100%" height="4" fill="url(#wv)"/></svg></span> <span class="w">FWHMd<svg><rect width="100%" height="4" fill="url(#wv)"/></svg></span> :</div>
<div class="t" style="right:887.00px;top:757.11px;font-size:10.5px;color:#dc0000;">2,19</div>
<div class="t" style="left:273.00px;top:757.11px;font-size:10.5px;color:#000;">microns</div>
<div class="t" style="right:930.00px;top:771.11px;font-size:10.5px;color:#dc0000;transform-origin:right top;transform: scaleX(0.9936);"><span class="w">Slit/<svg><rect width="100%" height="4" fill="url(#wv)"/></svg></span> image <span class="w">width<svg><rect width="100%" height="4" fill="url(#wv)"/></svg></span> on CCD, <span class="w">FWHMt<svg><rect width="100%" height="4" fill="url(#wv)"/></svg></span> :</div>
<div class="t" style="right:887.00px;top:771.11px;font-size:10.5px;color:#dc0000;">19,81</div>
<div class="t" style="left:273.00px;top:771.11px;font-size:10.5px;color:#000;">microns</div>
<div class="t" style="left:43.00px;top:883.41px;font-size:11.33px;color:#000;font-weight:bold;transform-origin:left top;transform: scaleX(0.8996);">REVISION:</div>
<div class="t" style="left:43.00px;top:897.41px;font-size:11.33px;color:#000;font-weight:bold;transform-origin:left top;transform: scaleX(0.9905);">V4.2 - <span class="w">March<svg><rect width="100%" height="4" fill="url(#wv)"/></svg></span> 2016</div>
<div class="t" style="left:193.00px;top:897.41px;font-size:11.33px;color:#000;font-weight:bold;transform-origin:left top;transform: scaleX(1.0165);">SNR <span class="w">by<svg><rect width="100%" height="4" fill="url(#wv)"/></svg></span> <span class="w">wavelength<svg><rect width="100%" height="4" fill="url(#wv)"/></svg></span> <span class="w">interval<svg><rect width="100%" height="4" fill="url(#wv)"/></svg></span> <span class="w">(resolution)<svg><rect width="100%" height="4" fill="url(#wv)"/></svg></span> <span class="w">added<svg><rect width="100%" height="4" fill="url(#wv)"/></svg></span> <span class="w">to<svg><rect width="100%" height="4" fill="url(#wv)"/></svg></span> <span class="w">summary.<svg><rect width="100%" height="4" fill="url(#wv)"/></svg></span> <span class="w">Actual<svg><rect width="100%" height="4" fill="url(#wv)"/></svg></span> <span class="w">grating<svg><rect width="100%" height="4" fill="url(#wv)"/></svg></span> <span class="w">sizes<svg><rect width="100%" height="4" fill="url(#wv)"/></svg></span> <span class="w">added.<svg><rect width="100%" height="4" fill="url(#wv)"/></svg></span></div>
<div class="t" style="left:43.00px;top:911.11px;font-size:10.5px;color:#000;transform-origin:left top;transform: scaleX(1.0526);">V4.1c - July 2013</div>
<div class="t" style="left:193.00px;top:911.11px;font-size:10.5px;color:#000;transform-origin:left top;transform: scaleX(1.0292);"><span class="w">Look-up<svg><rect width="100%" height="4" fill="url(#wv)"/></svg></span> <span class="w">table<svg><rect width="100%" height="4" fill="url(#wv)"/></svg></span> <span class="w">for<svg><rect width="100%" height="4" fill="url(#wv)"/></svg></span> <span class="w">Optometric<svg><rect width="100%" height="4" fill="url(#wv)"/></svg></span> <span class="w">grating<svg><rect width="100%" height="4" fill="url(#wv)"/></svg></span> <span class="w">efficiency.<svg><rect width="100%" height="4" fill="url(#wv)"/></svg></span> <span class="w">Formula<svg><rect width="100%" height="4" fill="url(#wv)"/></svg></span> <span class="w">for<svg><rect width="100%" height="4" fill="url(#wv)"/></svg></span> SNR <span class="w">amended.<svg><rect width="100%" height="4" fill="url(#wv)"/></svg></span></div>
<div class="t" style="left:43.00px;top:925.11px;font-size:10.5px;color:#000;transform-origin:left top;transform: scaleX(1.0442);">V4.1 <span class="w">-May<svg><rect width="100%" height="4" fill="url(#wv)"/></svg></span> 2013</div>
<div class="t" style="left:193.00px;top:925.11px;font-size:10.5px;color:#000;transform-origin:left top;transform: scaleX(1.0157);">Camera <span class="w">selection<svg><rect width="100%" height="4" fill="url(#wv)"/></svg></span> list <span class="w">added<svg><rect width="100%" height="4" fill="url(#wv)"/></svg></span></div>
<div class="t" style="left:43.00px;top:939.11px;font-size:10.5px;color:#000;transform-origin:left top;transform: scaleX(1.0511);">V4.0 - April 2012</div>
<div class="t" style="left:193.00px;top:939.11px;font-size:10.5px;color:#000;transform-origin:left top;transform: scaleX(1.0229);">New <span class="w">layout.<svg><rect width="100%" height="4" fill="url(#wv)"/></svg></span> <span class="w">Added<svg><rect width="100%" height="4" fill="url(#wv)"/></svg></span> Data Page. <span class="w">Updated<svg><rect width="100%" height="4" fill="url(#wv)"/></svg></span> <span class="w">comments<svg><rect width="100%" height="4" fill="url(#wv)"/></svg></span></div>
<div class="t" style="left:43.00px;top:953.11px;font-size:10.5px;color:#000;">V3.0 - April 2012</div>
<div class="t" style="left:193.00px;top:953.11px;font-size:10.5px;color:#000;">Collimator focal ratio added and data page updated with detectors and gratings</div>
<div class="t" style="left:359.00px;top:271.41px;font-size:11.33px;color:#0000d8;font-weight:bold;transform-origin:left top;transform: scaleX(1.0228);"><span class="w">Collimator<svg><rect width="100%" height="4" fill="url(#wv)"/></svg></span></div>
<div class="t" style="left:359.00px;top:285.41px;font-size:11.33px;color:#000;font-weight:bold;transform-origin:left top;transform: scaleX(0.9993);"><span class="w">Collimator-Focal<svg><rect width="100%" height="4" fill="url(#wv)"/></svg></span> <span class="w">length<svg><rect width="100%" height="4" fill="url(#wv)"/></svg></span> (f1) :</div>
<div class="t" style="right:505.00px;top:285.41px;font-size:11.33px;color:#000;font-weight:bold;">60</div>
<div class="t" style="left:655.00px;top:285.11px;font-size:10.5px;color:#000;">mm</div>
<div class="t" style="right:544.00px;top:299.11px;font-size:10.5px;color:#dc0000;transform-origin:right top;transform: scaleX(1.0147);"><span class="w">Collimator-Required<svg><rect width="100%" height="4" fill="url(#wv)"/></svg></span> <span class="w">Focal<svg><rect width="100%" height="4" fill="url(#wv)"/></svg></span> ratio (<span class="w">Fc<svg><rect width="100%" height="4" fill="url(#wv)"/></svg></span>):</div>
<div class="t" style="right:505.00px;top:299.11px;font-size:10.5px;color:#dc0000;">6,0</div>
<div class="t" style="right:544.00px;top:313.11px;font-size:10.5px;color:#dc0000;transform-origin:right top;transform: scaleX(0.9925);"><span class="w">Collimator-Minimum<svg><rect width="100%" height="4" fill="url(#wv)"/></svg></span> diameter (d1) :</div>
<div class="t" style="right:505.00px;top:313.11px;font-size:10.5px;color:#dc0000;">10,0</div>
<div class="t" style="left:655.00px;top:313.11px;font-size:10.5px;color:#000;">mm</div>
<div class="t" style="left:359.00px;top:327.11px;font-size:10.5px;color:#000;transform-origin:left top;transform: scaleX(0.9971);"><span class="w">Resolution<svg><rect width="100%" height="4" fill="url(#wv)"/></svg></span> of <span class="w">Collimation<svg><rect width="100%" height="4" fill="url(#wv)"/></svg></span> <span class="w">lens-FWHMo<svg><rect width="100%" height="4" fill="url(#wv)"/></svg></span> :</div>
<div class="t" style="right:505.00px;top:327.11px;font-size:10.5px;color:#000;">15</div>
<div class="t" style="left:655.00px;top:327.11px;font-size:10.5px;color:#000;">microns</div>
<div class="t" style="left:359.00px;top:341.41px;font-size:11.33px;color:#0000d8;font-weight:bold;transform-origin:left top;transform: scaleX(1.0489);">Camera</div>
<div class="t" style="left:359.00px;top:357.41px;font-size:11.33px;color:#000;font-weight:bold;transform-origin:left top;transform: scaleX(1.0060);"><span class="w">Camera-Focal<svg><rect width="100%" height="4" fill="url(#wv)"/></svg></span> <span class="w">length<svg><rect width="100%" height="4" fill="url(#wv)"/></svg></span> (f2) :</div>
<div class="t" style="right:505.00px;top:357.41px;font-size:11.33px;color:#000;font-weight:bold;">40</div>
<div class="t" style="left:655.00px;top:357.11px;font-size:10.5px;color:#000;">mm</div>
<div class="t" style="left:359.00px;top:371.41px;font-size:11.33px;color:#000;font-weight:bold;transform-origin:left top;transform: scaleX(1.0105);"><span class="w">Camera-Distance<svg><rect width="100%" height="4" fill="url(#wv)"/></svg></span> to <span class="w">grating<svg><rect width="100%" height="4" fill="url(#wv)"/></svg></span> (T) :</div>
<div class="t" style="right:505.00px;top:371.41px;font-size:11.33px;color:#000;font-weight:bold;">45</div>
<div class="t" style="left:655.00px;top:371.11px;font-size:10.5px;color:#000;">mm</div>
<div class="t" style="right:544.00px;top:385.11px;font-size:10.5px;color:#dc0000;transform-origin:right top;transform: scaleX(1.0017);"><span class="w">Camera-Minimum<svg><rect width="100%" height="4" fill="url(#wv)"/></svg></span> <span class="w">lens<svg><rect width="100%" height="4" fill="url(#wv)"/></svg></span> diameter (<span class="w">d'2<svg><rect width="100%" height="4" fill="url(#wv)"/></svg></span>) :</div>
<div class="t" style="right:505.00px;top:385.11px;font-size:10.5px;color:#dc0000;">22,1</div>
<div class="t" style="left:655.00px;top:385.11px;font-size:10.5px;color:#000;">mm</div>
<div class="t" style="right:544.00px;top:399.11px;font-size:10.5px;color:#dc0000;transform-origin:right top;transform: scaleX(1.0173);"><span class="w">Camera-Maximum<svg><rect width="100%" height="4" fill="url(#wv)"/></svg></span> <span class="w">focal<svg><rect width="100%" height="4" fill="url(#wv)"/></svg></span> ratio (<span class="w">Fo<svg><rect width="100%" height="4" fill="url(#wv)"/></svg></span>) :</div>
<div class="t" style="right:505.00px;top:399.11px;font-size:10.5px;color:#dc0000;">1,8</div>
<div class="t" style="left:359.00px;top:413.11px;font-size:10.5px;color:#000;transform-origin:left top;transform: scaleX(1.0096);"><span class="w">Resolution<svg><rect width="100%" height="4" fill="url(#wv)"/></svg></span> of Camera <span class="w">lens-FWHMc<svg><rect width="100%" height="4" fill="url(#wv)"/></svg></span> :</div>
<div class="t" style="right:505.00px;top:413.11px;font-size:10.5px;color:#000;">15</div>
<div class="t" style="left:655.00px;top:413.11px;font-size:10.5px;color:#000;">microns</div>
<div class="t" style="left:359.00px;top:441.11px;font-size:10.5px;color:#000;transform-origin:left top;transform: scaleX(0.9998);"><span class="w">Collimator/Camera<svg><rect width="100%" height="4" fill="url(#wv)"/></svg></span> <span class="w">-Total<svg><rect width="100%" height="4" fill="url(#wv)"/></svg></span> <span class="w">angle<svg><rect width="100%" height="4" fill="url(#wv)"/></svg></span>  (γ) :</div>
<div class="t" style="right:505.00px;top:441.41px;font-size:11.33px;color:#000;font-weight:bold;">45</div>
<div class="t" style="left:655.00px;top:439.11px;font-size:10.5px;color:#000;">°</div>
<div class="t" style="left:359.00px;top:455.41px;font-size:11.33px;color:#000;font-weight:bold;transform-origin:left top;transform: scaleX(1.0107);"><span class="w">Slit<svg><rect width="100%" height="4" fill="url(#wv)"/></svg></span> <span class="w">width<svg><rect width="100%" height="4" fill="url(#wv)"/></svg></span> (<span class="w">w<svg><rect width="100%" height="4" fill="url(#wv)"/></svg></span>) :</div>
<div class="t" style="right:505.00px;top:455.41px;font-size:11.33px;color:#000;font-weight:bold;">25</div>
<div class="t" style="left:655.00px;top:455.11px;font-size:10.5px;color:#000;">microns</div>
<div class="t" style="left:359.00px;top:469.41px;font-size:11.33px;color:#0000d8;font-weight:bold;transform-origin:left top;transform: scaleX(0.9904);"><span class="w">Grating<svg><rect width="100%" height="4" fill="url(#wv)"/></svg></span></div>
<div class="t" style="left:359.00px;top:483.41px;font-size:11.33px;color:#000;font-weight:bold;transform-origin:left top;transform: scaleX(1.0190);"><span class="w">Grating-Lines/<svg><rect width="100%" height="4" fill="url(#wv)"/></svg></span> mm (<span class="w">n<svg><rect width="100%" height="4" fill="url(#wv)"/></svg></span>) :</div>
<div class="t" style="right:505.00px;top:483.41px;font-size:11.33px;color:#000;font-weight:bold;">600</div>
<div class="t" style="left:359.00px;top:497.41px;font-size:11.33px;color:#000;font-weight:bold;transform-origin:left top;transform: scaleX(1.0074);"><span class="w">Grating-Diffraction<svg><rect width="100%" height="4" fill="url(#wv)"/></svg></span> order (<span class="w">k<svg><rect width="100%" height="4" fill="url(#wv)"/></svg></span>) :</div>
<div class="t" style="right:505.00px;top:497.41px;font-size:11.33px;color:#000;font-weight:bold;">1</div>
<div class="t" style="left:359.00px;top:513.01px;font-size:11.8px;color:#000;font-weight:bold;transform-origin:left top;transform: scaleX(0.9660);"><span class="w">Grating<svg><rect width="100%" height="4" fill="url(#wv)"/></svg></span> - <span class="w">Actual<svg><rect width="100%" height="4" fill="url(#wv)"/></svg></span> <span class="w">width<svg><rect width="100%" height="4" fill="url(#wv)"/></svg></span></div>
<div class="t" style="right:505.00px;top:513.41px;font-size:11.33px;color:#000;font-weight:bold;">30</div>
<div class="t" style="left:655.00px;top:513.11px;font-size:10.5px;color:#000;">mm</div>
<div class="t" style="left:359.00px;top:528.01px;font-size:11.8px;color:#000;font-weight:bold;transform-origin:left top;transform: scaleX(0.9673);"><span class="w">Grating<svg><rect width="100%" height="4" fill="url(#wv)"/></svg></span> - <span class="w">Actual<svg><rect width="100%" height="4" fill="url(#wv)"/></svg></span> <span class="w">height<svg><rect width="100%" height="4" fill="url(#wv)"/></svg></span></div>
<div class="t" style="right:505.00px;top:528.41px;font-size:11.33px;color:#000;font-weight:bold;">30</div>
<div class="t" style="left:655.00px;top:528.11px;font-size:10.5px;color:#000;">mm</div>
<div class="t" style="right:544.00px;top:543.11px;font-size:10.5px;color:#dc0000;transform-origin:right top;transform: scaleX(1.0023);"><span class="w">Grating-<svg><rect width="100%" height="4" fill="url(#wv)"/></svg></span> Minimum <span class="w">height<svg><rect width="100%" height="4" fill="url(#wv)"/></svg></span> (H) :</div>
<div class="t" style="right:505.00px;top:543.11px;font-size:10.5px;color:#dc0000;">27,0</div>
<div class="t" style="left:655.00px;top:543.11px;font-size:10.5px;color:#000;">mm</div>
<div class="t" style="right:544.00px;top:558.11px;font-size:10.5px;color:#dc0000;transform-origin:right top;transform: scaleX(1.0226);"><span class="w">Grating-<svg><rect width="100%" height="4" fill="url(#wv)"/></svg></span> Minimum <span class="w">width<svg><rect width="100%" height="4" fill="url(#wv)"/></svg></span> (W) :</div>
<div class="t" style="right:505.00px;top:558.11px;font-size:10.5px;color:#dc0000;">12,2</div>
<div class="t" style="left:655.00px;top:558.11px;font-size:10.5px;color:#000;">mm</div>
<div class="t" style="right:544.00px;top:572.41px;font-size:11.33px;color:#dc0000;font-weight:bold;transform-origin:right top;transform: scaleX(1.0219);"><span class="w">Dispersion<svg><rect width="100%" height="4" fill="url(#wv)"/></svg></span> (<span class="w">ρ<svg><rect width="100%" height="4" fill="url(#wv)"/></svg></span>) :</div>
<div class="t" style="right:505.00px;top:572.41px;font-size:11.33px;color:#dc0000;font-weight:bold;">2,65</div>
<div class="t" style="left:655.00px;top:572.11px;font-size:10.5px;color:#000;">Å/ pixel</div>
<div class="t" style="right:544.00px;top:586.41px;font-size:11.33px;color:#dc0000;font-weight:bold;transform-origin:right top;transform: scaleX(1.0055);"><span class="w">Resolving<svg><rect width="100%" height="4" fill="url(#wv)"/></svg></span> power (R) :</div>
<div class="t" style="right:505.00px;top:586.41px;font-size:11.33px;color:#dc0000;font-weight:bold;">808</div>
<div class="t" style="right:544.00px;top:600.41px;font-size:11.33px;color:#dc0000;font-weight:bold;transform-origin:right top;transform: scaleX(1.0038);"><span class="w">Spectral<svg><rect width="100%" height="4" fill="url(#wv)"/></svg></span> <span class="w">resolution<svg><rect width="100%" height="4" fill="url(#wv)"/></svg></span> (<span class="w">Δλ<svg><rect width="100%" height="4" fill="url(#wv)"/></svg></span>) :</div>
<div class="t" style="right:505.00px;top:600.41px;font-size:11.33px;color:#dc0000;font-weight:bold;">8,12</div>
<div class="t" style="left:655.00px;top:600.11px;font-size:10.5px;color:#000;">Å</div>
<div class="t" style="right:544.00px;top:614.11px;font-size:10.5px;color:#dc0000;transform-origin:right top;transform: scaleX(1.0473);"><span class="w">Dispersion<svg><rect width="100%" height="4" fill="url(#wv)"/></svg></span> (<span class="w">r<svg><rect width="100%" height="4" fill="url(#wv)"/></svg></span>) :</div>
<div class="t" style="right:505.00px;top:614.11px;font-size:10.5px;color:#dc0000;">410,09</div>
<div class="t" style="left:655.00px;top:614.11px;font-size:10.5px;color:#000;">Å/ mm</div>
<div class="t" style="left:359.00px;top:628.41px;font-size:11.33px;color:#0000d8;font-weight:bold;transform-origin:left top;transform: scaleX(1.0026);"><span class="w">Wavelength<svg><rect width="100%" height="4" fill="url(#wv)"/></svg></span> Range</div>
<div class="t" style="left:359.00px;top:644.41px;font-size:11.33px;color:#000;font-weight:bold;transform-origin:left top;transform: scaleX(1.0203);"><span class="w">Reference<svg><rect width="100%" height="4" fill="url(#wv)"/></svg></span> <span class="w">wavelength<svg><rect width="100%" height="4" fill="url(#wv)"/></svg></span> (λ0) :</div>
<div class="t" style="right:505.00px;top:644.41px;font-size:11.33px;color:#000;font-weight:bold;">6563</div>
<div class="t" style="left:655.00px;top:644.11px;font-size:10.5px;color:#000;">Å</div>
<div class="t" style="right:544.00px;top:658.11px;font-size:10.5px;color:#dc0000;transform-origin:right top;transform: scaleX(1.0122);">Lambda min. (λ1) :</div>
<div class="t" style="right:505.00px;top:658.11px;font-size:10.5px;color:#dc0000;">4722</div>
<div class="t" style="left:655.00px;top:658.11px;font-size:10.5px;color:#000;">Å</div>
<div class="t" style="right:544.00px;top:672.11px;font-size:10.5px;color:#dc0000;transform-origin:right top;transform: scaleX(1.0216);">Lambda max. (λ2) :</div>
<div class="t" style="right:505.00px;top:672.11px;font-size:10.5px;color:#dc0000;">8404</div>
<div class="t" style="left:655.00px;top:672.11px;font-size:10.5px;color:#000;">Å</div>
<div class="t" style="right:544.00px;top:687.41px;font-size:11.33px;color:#dc0000;font-weight:bold;transform-origin:right top;transform: scaleX(1.0265);"><span class="w">Wavelength<svg><rect width="100%" height="4" fill="url(#wv)"/></svg></span> range/ image frame:</div>
<div class="t" style="right:505.00px;top:687.41px;font-size:11.33px;color:#dc0000;font-weight:bold;">3682</div>
<div class="t" style="left:655.00px;top:687.11px;font-size:10.5px;color:#000;">Å</div>
<div class="t" style="left:359.00px;top:701.41px;font-size:11.33px;color:#0000d8;font-weight:bold;transform-origin:left top;transform: scaleX(1.0171);"><span class="w">Throughput<svg><rect width="100%" height="4" fill="url(#wv)"/></svg></span> efficiency</div>
<div class="t" style="left:359.00px;top:715.41px;font-size:11.33px;color:#000;font-weight:bold;transform-origin:left top;transform: scaleX(1.0314);"><span class="w">Transmission<svg><rect width="100%" height="4" fill="url(#wv)"/></svg></span> efficiency- <span class="w">guide<svg><rect width="100%" height="4" fill="url(#wv)"/></svg></span> <span class="w">system:<svg><rect width="100%" height="4" fill="url(#wv)"/></svg></span></div>
<div class="t" style="right:505.00px;top:715.41px;font-size:11.33px;color:#000;font-weight:bold;">1</div>
<div class="t" style="left:359.00px;top:729.41px;font-size:11.33px;color:#000;font-weight:bold;transform-origin:left top;transform: scaleX(1.0378);"><span class="w">Transmission<svg><rect width="100%" height="4" fill="url(#wv)"/></svg></span> efficiency <span class="w">-transfer<svg><rect width="100%" height="4" fill="url(#wv)"/></svg></span> <span class="w">mirror:<svg><rect width="100%" height="4" fill="url(#wv)"/></svg></span></div>
<div class="t" style="right:505.00px;top:729.41px;font-size:11.33px;color:#000;font-weight:bold;">0,98</div>
<div class="t" style="left:359.00px;top:743.41px;font-size:11.33px;color:#000;font-weight:bold;transform-origin:left top;transform: scaleX(1.0225);"><span class="w">Transmission<svg><rect width="100%" height="4" fill="url(#wv)"/></svg></span> <span class="w">efficiency-Collimator<svg><rect width="100%" height="4" fill="url(#wv)"/></svg></span> <span class="w">lens<svg><rect width="100%" height="4" fill="url(#wv)"/></svg></span> (To) :</div>
<div class="t" style="right:505.00px;top:743.41px;font-size:11.33px;color:#000;font-weight:bold;">0,96</div>
<div class="t" style="left:359.00px;top:757.41px;font-size:11.33px;color:#000;font-weight:bold;transform-origin:left top;transform: scaleX(1.0239);"><span class="w">Transmission<svg><rect width="100%" height="4" fill="url(#wv)"/></svg></span> <span class="w">efficiency-Camera<svg><rect width="100%" height="4" fill="url(#wv)"/></svg></span> <span class="w">lens<svg><rect width="100%" height="4" fill="url(#wv)"/></svg></span> (<span class="w">Tc<svg><rect width="100%" height="4" fill="url(#wv)"/></svg></span>) :</div>
<div class="t" style="right:505.00px;top:757.41px;font-size:11.33px;color:#000;font-weight:bold;">0,96</div>
<div class="t" style="right:544.00px;top:771.11px;font-size:10.5px;color:#dc0000;transform-origin:right top;transform: scaleX(1.0501);"><span class="w">Transmission<svg><rect width="100%" height="4" fill="url(#wv)"/></svg></span> <span class="w">efficiency-Grating<svg><rect width="100%" height="4" fill="url(#wv)"/></svg></span> (<span class="w">Tg<svg><rect width="100%" height="4" fill="url(#wv)"/></svg></span>) :</div>
<div class="t" style="right:505.00px;top:771.11px;font-size:10.5px;color:#dc0000;">0,6</div>
<div class="t" style="right:544.00px;top:785.11px;font-size:10.5px;color:#dc0000;transform-origin:right top;transform: scaleX(1.0413);"><span class="w">Entrance<svg><rect width="100%" height="4" fill="url(#wv)"/></svg></span> <span class="w">slit<svg><rect width="100%" height="4" fill="url(#wv)"/></svg></span> <span class="w">transmission(Tf):<svg><rect width="100%" height="4" fill="url(#wv)"/></svg></span></div>
<div class="t" style="right:505.00px;top:785.11px;font-size:10.5px;color:#dc0000;">0,70</div>
<div class="t" style="right:544.00px;top:799.11px;font-size:10.5px;color:#dc0000;transform-origin:right top;transform: scaleX(1.0611);">% efficiency <span class="w">due<svg><rect width="100%" height="4" fill="url(#wv)"/></svg></span> <span class="w">to<svg><rect width="100%" height="4" fill="url(#wv)"/></svg></span> <span class="w">undersized<svg><rect width="100%" height="4" fill="url(#wv)"/></svg></span> <span class="w">grating<svg><rect width="100%" height="4" fill="url(#wv)"/></svg></span> <span class="w">-width<svg><rect width="100%" height="4" fill="url(#wv)"/></svg></span></div>
<div class="t" style="right:505.00px;top:799.11px;font-size:10.5px;color:#dc0000;">1,00</div>
<div class="t" style="right:544.00px;top:813.11px;font-size:10.5px;color:#dc0000;transform-origin:right top;transform: scaleX(1.0487);">% efficiency <span class="w">due<svg><rect width="100%" height="4" fill="url(#wv)"/></svg></span> <span class="w">to<svg><rect width="100%" height="4" fill="url(#wv)"/></svg></span> <span class="w">undersized<svg><rect width="100%" height="4" fill="url(#wv)"/></svg></span> <span class="w">grating<svg><rect width="100%" height="4" fill="url(#wv)"/></svg></span> <span class="w">-height<svg><rect width="100%" height="4" fill="url(#wv)"/></svg></span></div>
<div class="t" style="right:505.00px;top:813.11px;font-size:10.5px;color:#dc0000;">1,00</div>
<div class="t" style="right:544.00px;top:827.41px;font-size:11.33px;color:#dc0000;font-weight:bold;transform-origin:right top;transform: scaleX(1.0159);">Total <span class="w">Transmission<svg><rect width="100%" height="4" fill="url(#wv)"/></svg></span> of <span class="w">Spectrograph<svg><rect width="100%" height="4" fill="url(#wv)"/></svg></span> (<span class="w">Ts<svg><rect width="100%" height="4" fill="url(#wv)"/></svg></span>) :</div>
<div class="t" style="right:505.00px;top:827.41px;font-size:11.33px;color:#dc0000;font-weight:bold;">0,412</div>
<div class="t" style="right:544.00px;top:855.11px;font-size:10.5px;color:#000;transform-origin:right top;transform: scaleX(1.0307);"><b style="font-size:11.33px" class="w">Note:<svg><rect width="100%" height="4" fill="url(#wv)"/></svg></b> <span class="w">thoughput<svg><rect width="100%" height="4" fill="url(#wv)"/></svg></span> does not <span class="w">take<svg><rect width="100%" height="4" fill="url(#wv)"/></svg></span> <span class="w">into<svg><rect width="100%" height="4" fill="url(#wv)"/></svg></span> account <span class="w">undersized<svg><rect width="100%" height="4" fill="url(#wv)"/></svg></span></div>
<div class="t" style="left:359.00px;top:869.11px;font-size:10.5px;color:#000;transform-origin:left top;transform: scaleX(1.0113);"><span class="w">collimator<svg><rect width="100%" height="4" fill="url(#wv)"/></svg></span> or <span class="w">imaging<svg><rect width="100%" height="4" fill="url(#wv)"/></svg></span> <span class="w">optics.<svg><rect width="100%" height="4" fill="url(#wv)"/></svg></span></div>
<div class="t" style="left:721.00px;top:271.41px;font-size:11.33px;color:#000;font-weight:bold;transform-origin:left top;transform: scaleX(1.0308);">Camera (Select <span class="w">from<svg><rect width="100%" height="4" fill="url(#wv)"/></svg></span> list)</div>
<div class="t" style="right:218.00px;top:271.41px;font-size:11.33px;color:#000;font-weight:bold;transform-origin:right top;transform: scaleX(0.9685);">ATiK314L</div>
<div class="t" style="left:721.00px;top:285.11px;font-size:10.5px;color:#000;transform-origin:left top;transform: scaleX(1.0342);">pixel <span class="w">sizel<svg><rect width="100%" height="4" fill="url(#wv)"/></svg></span> (p) :</div>
<div class="t" style="right:218.00px;top:285.11px;font-size:10.5px;color:#dc0000;">6,45</div>
<div class="t" style="left:942.00px;top:285.11px;font-size:10.5px;color:#000;">microns</div>
<div class="t" style="left:721.00px;top:299.11px;font-size:10.5px;color:#000;transform-origin:left top;transform: scaleX(1.0353);"><span class="w">number<svg><rect width="100%" height="4" fill="url(#wv)"/></svg></span> of X pixels(<span class="w">Nx<svg><rect width="100%" height="4" fill="url(#wv)"/></svg></span>) :</div>
<div class="t" style="right:218.00px;top:299.11px;font-size:10.5px;color:#dc0000;">1392</div>
<div class="t" style="left:721.00px;top:313.11px;font-size:10.5px;color:#000;transform-origin:left top;transform: scaleX(1.0657);"><span class="w">quantum<svg><rect width="100%" height="4" fill="url(#wv)"/></svg></span> efficiency (η) :</div>
<div class="t" style="right:218.00px;top:313.11px;font-size:10.5px;color:#dc0000;">52,80</div>
<div class="t" style="left:942.00px;top:313.11px;font-size:10.5px;color:#000;">%</div>
<div class="t" style="left:721.00px;top:327.11px;font-size:10.5px;color:#000;transform-origin:left top;transform: scaleX(1.0044);">Read <span class="w">noise<svg><rect width="100%" height="4" fill="url(#wv)"/></svg></span> (RON) :</div>
<div class="t" style="left:942.00px;top:327.11px;font-size:10.5px;color:#000;"><span class="w">e-<svg><rect width="100%" height="4" fill="url(#wv)"/></svg></span>/pixel</div>
<div class="t" style="left:721.00px;top:341.11px;font-size:10.5px;color:#000;transform-origin:left top;transform: scaleX(1.0283);"><span class="w">Dark<svg><rect width="100%" height="4" fill="url(#wv)"/></svg></span> <span class="w">noise<svg><rect width="100%" height="4" fill="url(#wv)"/></svg></span> (<span class="w">Nd<svg><rect width="100%" height="4" fill="url(#wv)"/></svg></span>) :</div>
<div class="t" style="right:218.00px;top:341.11px;font-size:10.5px;color:#dc0000;">0,0005</div>
<div class="t" style="left:942.00px;top:341.11px;font-size:10.5px;color:#000;"><span class="w">e-<svg><rect width="100%" height="4" fill="url(#wv)"/></svg></span>/s/pixel</div>
<div class="t" style="left:721.00px;top:357.41px;font-size:11.33px;color:#000;font-weight:bold;transform-origin:left top;transform: scaleX(0.9752);"><span class="w">Binning,<svg><rect width="100%" height="4" fill="url(#wv)"/></svg></span> X <span class="w">axis<svg><rect width="100%" height="4" fill="url(#wv)"/></svg></span> (<span class="w">fλ<svg><rect width="100%" height="4" fill="url(#wv)"/></svg></span>) :</div>
<div class="t" style="right:218.00px;top:357.41px;font-size:11.33px;color:#000;font-weight:bold;">1</div>
<div class="t" style="left:721.00px;top:371.41px;font-size:11.33px;color:#000;font-weight:bold;transform-origin:left top;transform: scaleX(0.9789);"><span class="w">Binning,<svg><rect width="100%" height="4" fill="url(#wv)"/></svg></span> Y <span class="w">axis<svg><rect width="100%" height="4" fill="url(#wv)"/></svg></span> (<span class="w">fy<svg><rect width="100%" height="4" fill="url(#wv)"/></svg></span>) :</div>
<div class="t" style="right:218.00px;top:371.41px;font-size:11.33px;color:#000;font-weight:bold;">1</div>
<div class="t" style="right:277.00px;top:385.41px;font-size:11.33px;color:#dc0000;font-weight:bold;transform-origin:right top;transform: scaleX(0.9803);">Sampling Factor :</div>
<div class="t" style="right:218.00px;top:385.41px;font-size:11.33px;color:#dc0000;font-weight:bold;">3,01</div>
<div class="t" style="left:721.00px;top:399.41px;font-size:11.33px;color:#0000d8;font-weight:bold;transform-origin:left top;transform: scaleX(1.0110);"><span class="w">Exposure<svg><rect width="100%" height="4" fill="url(#wv)"/></svg></span></div>
<div class="t" style="left:721.00px;top:413.41px;font-size:11.33px;color:#000;font-weight:bold;transform-origin:left top;transform: scaleX(1.0332);"><span class="w">Subs,<svg><rect width="100%" height="4" fill="url(#wv)"/></svg></span> <span class="w">exposure<svg><rect width="100%" height="4" fill="url(#wv)"/></svg></span> time (<span class="w">ts<svg><rect width="100%" height="4" fill="url(#wv)"/></svg></span>) :</div>
<div class="t" style="right:218.00px;top:413.41px;font-size:11.33px;color:#000;font-weight:bold;">600</div>
<div class="t" style="left:942.00px;top:413.11px;font-size:10.5px;color:#000;"><span class="w">secs<svg><rect width="100%" height="4" fill="url(#wv)"/></svg></span></div>
<div class="t" style="left:721.00px;top:427.41px;font-size:11.33px;color:#000;font-weight:bold;transform-origin:left top;transform: scaleX(1.0408);"><span class="w">number<svg><rect width="100%" height="4" fill="url(#wv)"/></svg></span> of <span class="w">subframes<svg><rect width="100%" height="4" fill="url(#wv)"/></svg></span> (n) :</div>
<div class="t" style="right:218.00px;top:427.41px;font-size:11.33px;color:#000;font-weight:bold;">6</div>
<div class="t" style="right:277.00px;top:441.41px;font-size:11.33px;color:#dc0000;font-weight:bold;transform-origin:right top;transform: scaleX(1.0303);">Total <span class="w">exposure<svg><rect width="100%" height="4" fill="url(#wv)"/></svg></span> <span class="w">t<svg><rect width="100%" height="4" fill="url(#wv)"/></svg></span>ime (t):</div>
<div class="t" style="right:218.00px;top:441.41px;font-size:11.33px;color:#dc0000;font-weight:bold;">3600</div>
<div class="t" style="left:942.00px;top:441.11px;font-size:10.5px;color:#000;"><span class="w">secs<svg><rect width="100%" height="4" fill="url(#wv)"/></svg></span></div>
<div class="t" style="left:721.00px;top:455.41px;font-size:11.33px;color:#0000d8;font-weight:bold;transform-origin:left top;transform: scaleX(1.0360);">Spectrum <span class="w">size/<svg><rect width="100%" height="4" fill="url(#wv)"/></svg></span> spread</div>
<div class="t" style="left:721.00px;top:469.11px;font-size:10.5px;color:#dc0000;transform-origin:left top;transform: scaleX(1.0282);"><span class="w">Height<svg><rect width="100%" height="4" fill="url(#wv)"/></svg></span> of Spectrum (<span class="w">η<svg><rect width="100%" height="4" fill="url(#wv)"/></svg></span>) :</div>
<div class="t" style="right:224.00px;top:469.11px;font-size:10.5px;color:#dc0000;">1</div>
<div class="t" style="left:942.00px;top:469.11px;font-size:10.5px;color:#000;">pixel</div>
<div class="t" style="left:799.00px;top:497.41px;font-size:11.33px;color:#0000d8;font-weight:bold;transform-origin:center top;transform:translateX(-50%) scaleX(1.0089);">Target Star</div>
<div class="t" style="left:721.00px;top:513.41px;font-size:11.33px;color:#000;font-weight:bold;transform-origin:left top;transform: scaleX(1.0269);">Magnitude (m) :</div>
<div class="t" style="right:218.00px;top:513.41px;font-size:11.33px;color:#000;font-weight:bold;">9</div>
<div class="t" style="left:721.00px;top:528.41px;font-size:11.33px;color:#000;font-weight:bold;transform-origin:left top;transform: scaleX(1.0325);"><span class="w">Effective<svg><rect width="100%" height="4" fill="url(#wv)"/></svg></span> <span class="w">temperature<svg><rect width="100%" height="4" fill="url(#wv)"/></svg></span> (Te) :</div>
<div class="t" style="right:218.00px;top:528.41px;font-size:11.33px;color:#000;font-weight:bold;">10800</div>
<div class="t" style="left:942.00px;top:528.11px;font-size:10.5px;color:#000;">K</div>
<div class="t" style="left:721.00px;top:543.41px;font-size:11.33px;color:#000;font-weight:bold;transform-origin:left top;transform: scaleX(1.0040);"><span class="w">Bolometric<svg><rect width="100%" height="4" fill="url(#wv)"/></svg></span> <span class="w">Correction<svg><rect width="100%" height="4" fill="url(#wv)"/></svg></span> (BC) :</div>
<div class="t" style="right:218.00px;top:543.41px;font-size:11.33px;color:#000;font-weight:bold;">-0,4</div>
<div class="t" style="left:721.00px;top:558.41px;font-size:11.33px;color:#0000d8;font-weight:bold;transform-origin:left top;transform: scaleX(0.9888);">SNR <span class="w">(Theoretical)<svg><rect width="100%" height="4" fill="url(#wv)"/></svg></span></div>
<div class="t" style="right:277.00px;top:572.41px;font-size:11.33px;color:#dc0000;font-weight:bold;transform-origin:right top;transform: scaleX(0.9646);"><span class="w">Signal/Noise<svg><rect width="100%" height="4" fill="url(#wv)"/></svg></span> (SNR/pixel) :</div>
<div class="t" style="right:218.00px;top:572.41px;font-size:11.33px;color:#dc0000;font-weight:bold;">167</div>
<div class="t" style="right:277.00px;top:586.41px;font-size:11.33px;color:#dc0000;font-weight:bold;transform-origin:right top;transform: scaleX(0.9597);"><span class="w">Signal/Noise<svg><rect width="100%" height="4" fill="url(#wv)"/></svg></span> (SNR/<span class="w">Δλ<svg><rect width="100%" height="4" fill="url(#wv)"/></svg></span>) :</div>
<div class="t" style="right:218.00px;top:586.41px;font-size:11.33px;color:#dc0000;font-weight:bold;">294</div>
<div class="t" style="left:721.00px;top:600.41px;font-size:11.33px;color:#0000d8;font-weight:bold;transform-origin:left top;transform: scaleX(1.0206);"><span class="w">Limiting<svg><rect width="100%" height="4" fill="url(#wv)"/></svg></span> Mag</div>
<div class="t" style="right:277.00px;top:614.11px;font-size:10.5px;color:#dc0000;transform-origin:right top;transform: scaleX(1.0212);"><span class="w">Limiting<svg><rect width="100%" height="4" fill="url(#wv)"/></svg></span> <span class="w">Mag.(Bowen-mod):<svg><rect width="100%" height="4" fill="url(#wv)"/></svg></span></div>
<div class="t" style="right:218.00px;top:614.11px;font-size:10.5px;color:#dc0000;">15,10</div>
<div class="t" style="left:721.00px;top:658.41px;font-size:11.33px;color:#0000d8;font-weight:bold;transform-origin:left top;transform: scaleX(0.9636);">SNR <span class="w">Calculations<svg><rect width="100%" height="4" fill="url(#wv)"/></svg></span></div>
<div class="t" style="right:277.00px;top:672.11px;font-size:10.5px;color:#000;transform-origin:right top;transform: scaleX(1.0290);"><span class="w">Number<svg><rect width="100%" height="4" fill="url(#wv)"/></svg></span> of  <span class="w">photons<svg><rect width="100%" height="4" fill="url(#wv)"/></svg></span> (E) :</div>
<div class="t" style="right:218.00px;top:672.11px;font-size:10.5px;color:#000;">0,18</div>
<div class="t" style="left:942.00px;top:672.11px;font-size:10.5px;color:#000;"><span class="w">photons<svg><rect width="100%" height="4" fill="url(#wv)"/></svg></span>/cm2/s/Å</div>
<div class="t" style="right:277.00px;top:687.11px;font-size:10.5px;color:#000;transform-origin:right top;transform: scaleX(1.0301);">Sky background(Ed) :</div>
<div class="t" style="right:218.00px;top:687.11px;font-size:10.5px;color:#000;">0,000116</div>
<div class="t" style="left:942.00px;top:687.11px;font-size:10.5px;color:#000;"><span class="w">photons<svg><rect width="100%" height="4" fill="url(#wv)"/></svg></span>/cm2/s/Å/ <span class="w">arc<svg><rect width="100%" height="4" fill="url(#wv)"/></svg></span> sec</div>
<div class="t" style="right:277.00px;top:701.11px;font-size:10.5px;color:#000;transform-origin:right top;transform: scaleX(1.0336);"><span class="w">Final<svg><rect width="100%" height="4" fill="url(#wv)"/></svg></span> Efficiency (R) :</div>
<div class="t" style="right:218.00px;top:701.11px;font-size:10.5px;color:#000;">5,28</div>
<div class="t" style="left:942.00px;top:701.11px;font-size:10.5px;color:#000;">%</div>
<div class="t" style="right:277.00px;top:715.11px;font-size:10.5px;color:#000;transform-origin:right top;transform: scaleX(1.0164);"><span class="w">Useful<svg><rect width="100%" height="4" fill="url(#wv)"/></svg></span> <span class="w">signal<svg><rect width="100%" height="4" fill="url(#wv)"/></svg></span> (Nm) :</div>
<div class="t" style="right:218.00px;top:715.11px;font-size:10.5px;color:#000;">29067</div>
<div class="t" style="left:942.00px;top:715.11px;font-size:10.5px;color:#000;"><span class="w">e-<svg><rect width="100%" height="4" fill="url(#wv)"/></svg></span>/pixel</div>
<div class="t" style="right:277.00px;top:729.11px;font-size:10.5px;color:#000;transform-origin:right top;transform: scaleX(1.0396);">Background <span class="w">noise<svg><rect width="100%" height="4" fill="url(#wv)"/></svg></span> (<span class="w">Ns<svg><rect width="100%" height="4" fill="url(#wv)"/></svg></span>) :</div>
<div class="t" style="right:218.00px;top:729.11px;font-size:10.5px;color:#000;">141794</div>
<div class="t" style="left:942.00px;top:729.11px;font-size:10.5px;color:#000;"><span class="w">e-<svg><rect width="100%" height="4" fill="url(#wv)"/></svg></span>/pixel</div>
<div class="t" style="right:277.00px;top:743.11px;font-size:10.5px;color:#000;transform-origin:right top;transform: scaleX(1.0249);"><span class="w">Noise<svg><rect width="100%" height="4" fill="url(#wv)"/></svg></span>(σ) :</div>
<div class="t" style="right:218.00px;top:743.11px;font-size:10.5px;color:#000;">174</div>
<div class="t" style="left:942.00px;top:743.11px;font-size:10.5px;color:#000;font-style:italic;"><span class="w">e-<svg><rect width="100%" height="4" fill="url(#wv)"/></svg></span>/pixel</div>
<div class="t" style="right:277.00px;top:757.11px;font-size:10.5px;color:#000;transform-origin:right top;transform: scaleX(1.0181);"><span class="w">Signal/Noise<svg><rect width="100%" height="4" fill="url(#wv)"/></svg></span> <span class="w">by<svg><rect width="100%" height="4" fill="url(#wv)"/></svg></span> interval Δλ :</div>
<div class="t" style="right:218.00px;top:757.11px;font-size:10.5px;color:#000;">294</div>
<div class="t" style="left:942.00px;top:757.11px;font-size:10.5px;color:#000;font-style:italic;"><span class="w">e-<svg><rect width="100%" height="4" fill="url(#wv)"/></svg></span>/pixel</div>
<div class="t" style="right:277.00px;top:771.11px;font-size:10.5px;color:#000;font-style:italic;transform-origin:right top;transform: scaleX(1.0563);"><span class="w">Noise<svg><rect width="100%" height="4" fill="url(#wv)"/></svg></span> <span class="w">from<svg><rect width="100%" height="4" fill="url(#wv)"/></svg></span> <span class="w">Signal<svg><rect width="100%" height="4" fill="url(#wv)"/></svg></span> :</div>
<div class="t" style="right:218.00px;top:771.11px;font-size:10.5px;color:#000;">413</div>
<div class="t" style="left:942.00px;top:771.11px;font-size:10.5px;color:#000;font-style:italic;"><span class="w">e-<svg><rect width="100%" height="4" fill="url(#wv)"/></svg></span>/pixel</div>
<div class="t" style="right:277.00px;top:785.11px;font-size:10.5px;color:#000;font-style:italic;transform-origin:right top;transform: scaleX(1.0770);"><span class="w">Noise<svg><rect width="100%" height="4" fill="url(#wv)"/></svg></span> <span class="w">from<svg><rect width="100%" height="4" fill="url(#wv)"/></svg></span> Electronics :</div>
<div class="t" style="right:218.00px;top:785.11px;font-size:10.5px;color:#000;">32</div>
<div class="t" style="left:942.00px;top:785.11px;font-size:10.5px;color:#000;font-style:italic;"><span class="w">e-<svg><rect width="100%" height="4" fill="url(#wv)"/></svg></span>/pixel</div>
<div class="t" style="left:721.00px;top:813.11px;font-size:10.5px;color:#000;transform-origin:left top;transform: scaleX(1.0246);"><b style="font-size:11.33px" class="w">Note:<svg><rect width="100%" height="4" fill="url(#wv)"/></svg></b> <span class="w">Actual<svg><rect width="100%" height="4" fill="url(#wv)"/></svg></span> SNR <span class="w">obtained<svg><rect width="100%" height="4" fill="url(#wv)"/></svg></span> <span class="w">will<svg><rect width="100%" height="4" fill="url(#wv)"/></svg></span> <span class="w">be<svg><rect width="100%" height="4" fill="url(#wv)"/></svg></span> <span class="w">influenced<svg><rect width="100%" height="4" fill="url(#wv)"/></svg></span> <span class="w">by<svg><rect width="100%" height="4" fill="url(#wv)"/></svg></span></div>
<div class="t" style="left:721.00px;top:827.11px;font-size:10.5px;color:#000;transform-origin:left top;transform: scaleX(1.0254);">the <span class="w">guiding<svg><rect width="100%" height="4" fill="url(#wv)"/></svg></span> (total time the target star is held on the <span class="w">slit<svg><rect width="100%" height="4" fill="url(#wv)"/></svg></span> gap)</div>
<div class="t" style="left:721.00px;top:841.11px;font-size:10.5px;color:#000;transform-origin:left top;transform: scaleX(1.0305);">A <span class="w">good<svg><rect width="100%" height="4" fill="url(#wv)"/></svg></span> <span class="w">estimate<svg><rect width="100%" height="4" fill="url(#wv)"/></svg></span> of <span class="w">actual<svg><rect width="100%" height="4" fill="url(#wv)"/></svg></span> SNR is 50% - 80% the <span class="w">theoretical.<svg><rect width="100%" height="4" fill="url(#wv)"/></svg></span></div>
<div class="r" style="left:8px;top:167px;width:1075px;height:18px;background:linear-gradient(#f6f6f6,#ededed);"></div>
<div class="r" style="left:8px;top:167px;width:1075px;height:1px;background:#767676;"></div>
<div class="r" style="left:8px;top:185px;width:1075px;height:1px;background:#767676;"></div>
<div class="r" style="left:1043px;top:168px;width:37px;height:17px;background:linear-gradient(#80bbfa 0%,#80bbfa 45%,#3d97f5 50%,#3d97f5 100%);"></div>
<div class="r" style="left:190px;top:167px;width:1px;height:18px;background:#767676;"></div>
<div class="t" style="left:115.50px;top:171.42px;font-size:12.5px;color:#000;transform:translateX(-50%);">A</div>
<div class="r" style="left:227px;top:167px;width:1px;height:18px;background:#767676;"></div>
<div class="t" style="left:209.00px;top:171.42px;font-size:12.5px;color:#000;transform:translateX(-50%);">B</div>
<div class="r" style="left:270px;top:167px;width:1px;height:18px;background:#767676;"></div>
<div class="t" style="left:249.00px;top:171.42px;font-size:12.5px;color:#000;transform:translateX(-50%);">C</div>
<div class="r" style="left:331px;top:167px;width:1px;height:18px;background:#767676;"></div>
<div class="t" style="left:301.00px;top:171.42px;font-size:12.5px;color:#000;transform:translateX(-50%);">D</div>
<div class="r" style="left:356px;top:167px;width:1px;height:18px;background:#767676;"></div>
<div class="t" style="left:344.00px;top:171.42px;font-size:12.5px;color:#000;transform:translateX(-50%);">E</div>
<div class="r" style="left:613px;top:167px;width:1px;height:18px;background:#767676;"></div>
<div class="t" style="left:485.00px;top:171.42px;font-size:12.5px;color:#000;transform:translateX(-50%);">F</div>
<div class="r" style="left:652px;top:167px;width:1px;height:18px;background:#767676;"></div>
<div class="t" style="left:633.00px;top:171.42px;font-size:12.5px;color:#000;transform:translateX(-50%);">G</div>
<div class="r" style="left:698px;top:167px;width:1px;height:18px;background:#767676;"></div>
<div class="t" style="left:675.50px;top:171.42px;font-size:12.5px;color:#000;transform:translateX(-50%);">H</div>
<div class="r" style="left:718px;top:167px;width:1px;height:18px;background:#767676;"></div>
<div class="t" style="left:708.50px;top:171.42px;font-size:12.5px;color:#000;transform:translateX(-50%);">I</div>
<div class="r" style="left:880px;top:167px;width:1px;height:18px;background:#767676;"></div>
<div class="t" style="left:799.50px;top:171.42px;font-size:12.5px;color:#000;transform:translateX(-50%);">J</div>
<div class="r" style="left:939px;top:167px;width:1px;height:18px;background:#767676;"></div>
<div class="t" style="left:910.00px;top:171.42px;font-size:12.5px;color:#000;transform:translateX(-50%);">K</div>
<div class="r" style="left:994px;top:167px;width:1px;height:18px;background:#767676;"></div>
<div class="t" style="left:967.00px;top:171.42px;font-size:12.5px;color:#000;transform:translateX(-50%);">L</div>
<div class="r" style="left:1042px;top:167px;width:1px;height:18px;background:#767676;"></div>
<div class="t" style="left:1018.50px;top:171.42px;font-size:12.5px;color:#000;transform:translateX(-50%);">M</div>
<div class="t" style="left:1061.00px;top:171.42px;font-size:12.5px;color:#ffffff;font-weight:bold;transform:translateX(-50%);">N</div>
<div class="r" style="left:8px;top:186px;width:32px;height:770px;background:#f0f0f0;"></div>
<div class="r" style="left:40px;top:167px;width:1px;height:789px;background:#767676;"></div>
<div class="r" style="left:8px;top:202px;width:32px;height:1px;background:#767676;"></div>
<div class="t" style="left:24.50px;top:188.57px;font-size:13.5px;color:#000;transform-origin:center top;transform:translateX(-50%) scaleX(0.8800);">1</div>
<div class="r" style="left:8px;top:219px;width:32px;height:1px;background:#767676;"></div>
<div class="t" style="left:24.50px;top:205.57px;font-size:13.5px;color:#000;transform-origin:center top;transform:translateX(-50%) scaleX(0.8800);">2</div>
<div class="r" style="left:8px;top:236px;width:32px;height:1px;background:#767676;"></div>
<div class="t" style="left:24.50px;top:222.57px;font-size:13.5px;color:#000;transform-origin:center top;transform:translateX(-50%) scaleX(0.8800);">3</div>
<div class="r" style="left:8px;top:253px;width:32px;height:1px;background:#767676;"></div>
<div class="t" style="left:24.50px;top:239.57px;font-size:13.5px;color:#000;transform-origin:center top;transform:translateX(-50%) scaleX(0.8800);">4</div>
<div class="r" style="left:8px;top:270px;width:32px;height:1px;background:#767676;"></div>
<div class="t" style="left:24.50px;top:256.57px;font-size:13.5px;color:#000;transform-origin:center top;transform:translateX(-50%) scaleX(0.8800);">5</div>
<div class="r" style="left:8px;top:284px;width:32px;height:1px;background:#767676;"></div>
<div class="t" style="left:24.50px;top:270.57px;font-size:13.5px;color:#000;transform-origin:center top;transform:translateX(-50%) scaleX(0.8800);">6</div>
<div class="r" style="left:8px;top:298px;width:32px;height:1px;background:#767676;"></div>
<div class="t" style="left:24.50px;top:284.57px;font-size:13.5px;color:#000;transform-origin:center top;transform:translateX(-50%) scaleX(0.8800);">7</div>
<div class="r" style="left:8px;top:312px;width:32px;height:1px;background:#767676;"></div>
<div class="t" style="left:24.50px;top:298.57px;font-size:13.5px;color:#000;transform-origin:center top;transform:translateX(-50%) scaleX(0.8800);">8</div>
<div class="r" style="left:8px;top:326px;width:32px;height:1px;background:#767676;"></div>
<div class="t" style="left:24.50px;top:312.57px;font-size:13.5px;color:#000;transform-origin:center top;transform:translateX(-50%) scaleX(0.8800);">9</div>
<div class="r" style="left:8px;top:340px;width:32px;height:1px;background:#767676;"></div>
<div class="t" style="left:24.50px;top:326.57px;font-size:13.5px;color:#000;transform-origin:center top;transform:translateX(-50%) scaleX(0.8800);">10</div>
<div class="r" style="left:8px;top:354px;width:32px;height:1px;background:#767676;"></div>
<div class="t" style="left:24.50px;top:340.57px;font-size:13.5px;color:#000;transform-origin:center top;transform:translateX(-50%) scaleX(0.8800);">11</div>
<div class="r" style="left:8px;top:370px;width:32px;height:1px;background:#767676;"></div>
<div class="t" style="left:24.50px;top:356.57px;font-size:13.5px;color:#000;transform-origin:center top;transform:translateX(-50%) scaleX(0.8800);">12</div>
<div class="r" style="left:8px;top:384px;width:32px;height:1px;background:#767676;"></div>
<div class="t" style="left:24.50px;top:370.57px;font-size:13.5px;color:#000;transform-origin:center top;transform:translateX(-50%) scaleX(0.8800);">13</div>
<div class="r" style="left:8px;top:398px;width:32px;height:1px;background:#767676;"></div>
<div class="t" style="left:24.50px;top:384.57px;font-size:13.5px;color:#000;transform-origin:center top;transform:translateX(-50%) scaleX(0.8800);">14</div>
<div class="r" style="left:8px;top:412px;width:32px;height:1px;background:#767676;"></div>
<div class="t" style="left:24.50px;top:398.57px;font-size:13.5px;color:#000;transform-origin:center top;transform:translateX(-50%) scaleX(0.8800);">15</div>
<div class="r" style="left:8px;top:426px;width:32px;height:1px;background:#767676;"></div>
<div class="t" style="left:24.50px;top:412.57px;font-size:13.5px;color:#000;transform-origin:center top;transform:translateX(-50%) scaleX(0.8800);">16</div>
<div class="r" style="left:8px;top:440px;width:32px;height:1px;background:#767676;"></div>
<div class="t" style="left:24.50px;top:426.57px;font-size:13.5px;color:#000;transform-origin:center top;transform:translateX(-50%) scaleX(0.8800);">17</div>
<div class="r" style="left:8px;top:454px;width:32px;height:1px;background:#767676;"></div>
<div class="t" style="left:24.50px;top:440.57px;font-size:13.5px;color:#000;transform-origin:center top;transform:translateX(-50%) scaleX(0.8800);">18</div>
<div class="r" style="left:8px;top:468px;width:32px;height:1px;background:#767676;"></div>
<div class="t" style="left:24.50px;top:454.57px;font-size:13.5px;color:#000;transform-origin:center top;transform:translateX(-50%) scaleX(0.8800);">19</div>
<div class="r" style="left:8px;top:482px;width:32px;height:1px;background:#767676;"></div>
<div class="t" style="left:24.50px;top:468.57px;font-size:13.5px;color:#000;transform-origin:center top;transform:translateX(-50%) scaleX(0.8800);">20</div>
<div class="r" style="left:8px;top:496px;width:32px;height:1px;background:#767676;"></div>
<div class="t" style="left:24.50px;top:482.57px;font-size:13.5px;color:#000;transform-origin:center top;transform:translateX(-50%) scaleX(0.8800);">21</div>
<div class="r" style="left:8px;top:510px;width:32px;height:1px;background:#767676;"></div>
<div class="t" style="left:24.50px;top:496.57px;font-size:13.5px;color:#000;transform-origin:center top;transform:translateX(-50%) scaleX(0.8800);">22</div>
<div class="r" style="left:8px;top:526px;width:32px;height:1px;background:#767676;"></div>
<div class="t" style="left:24.50px;top:512.57px;font-size:13.5px;color:#000;transform-origin:center top;transform:translateX(-50%) scaleX(0.8800);">23</div>
<div class="r" style="left:8px;top:541px;width:32px;height:1px;background:#767676;"></div>
<div class="t" style="left:24.50px;top:527.57px;font-size:13.5px;color:#000;transform-origin:center top;transform:translateX(-50%) scaleX(0.8800);">24</div>
<div class="r" style="left:8px;top:556px;width:32px;height:1px;background:#767676;"></div>
<div class="t" style="left:24.50px;top:542.57px;font-size:13.5px;color:#000;transform-origin:center top;transform:translateX(-50%) scaleX(0.8800);">25</div>
<div class="r" style="left:8px;top:571px;width:32px;height:1px;background:#767676;"></div>
<div class="t" style="left:24.50px;top:557.57px;font-size:13.5px;color:#000;transform-origin:center top;transform:translateX(-50%) scaleX(0.8800);">26</div>
<div class="r" style="left:8px;top:585px;width:32px;height:1px;background:#767676;"></div>
<div class="t" style="left:24.50px;top:571.57px;font-size:13.5px;color:#000;transform-origin:center top;transform:translateX(-50%) scaleX(0.8800);">27</div>
<div class="r" style="left:8px;top:586px;width:32px;height:14px;background:#3d97f5;"></div>
<div class="r" style="left:8px;top:586px;width:12px;height:14px;background:#80bbfa;"></div>
<div class="r" style="left:8px;top:599px;width:32px;height:1px;background:#767676;"></div>
<div class="t" style="left:24.50px;top:585.57px;font-size:13.5px;color:#fff;transform-origin:center top;transform:translateX(-50%) scaleX(0.8800);">28</div>
<div class="r" style="left:8px;top:600px;width:32px;height:14px;background:#3d97f5;"></div>
<div class="r" style="left:8px;top:600px;width:12px;height:14px;background:#80bbfa;"></div>
<div class="r" style="left:8px;top:613px;width:32px;height:1px;background:#767676;"></div>
<div class="t" style="left:24.50px;top:599.57px;font-size:13.5px;color:#fff;transform-origin:center top;transform:translateX(-50%) scaleX(0.8800);">29</div>
<div class="r" style="left:8px;top:627px;width:32px;height:1px;background:#767676;"></div>
<div class="t" style="left:24.50px;top:613.57px;font-size:13.5px;color:#000;transform-origin:center top;transform:translateX(-50%) scaleX(0.8800);">30</div>
<div class="r" style="left:8px;top:641px;width:32px;height:1px;background:#767676;"></div>
<div class="t" style="left:24.50px;top:627.57px;font-size:13.5px;color:#000;transform-origin:center top;transform:translateX(-50%) scaleX(0.8800);">31</div>
<div class="r" style="left:8px;top:657px;width:32px;height:1px;background:#767676;"></div>
<div class="t" style="left:24.50px;top:643.57px;font-size:13.5px;color:#000;transform-origin:center top;transform:translateX(-50%) scaleX(0.8800);">32</div>
<div class="r" style="left:8px;top:671px;width:32px;height:1px;background:#767676;"></div>
<div class="t" style="left:24.50px;top:657.57px;font-size:13.5px;color:#000;transform-origin:center top;transform:translateX(-50%) scaleX(0.8800);">33</div>
<div class="r" style="left:8px;top:685px;width:32px;height:1px;background:#767676;"></div>
<div class="t" style="left:24.50px;top:671.57px;font-size:13.5px;color:#000;transform-origin:center top;transform:translateX(-50%) scaleX(0.8800);">34</div>
<div class="r" style="left:8px;top:700px;width:32px;height:1px;background:#767676;"></div>
<div class="t" style="left:24.50px;top:686.57px;font-size:13.5px;color:#000;transform-origin:center top;transform:translateX(-50%) scaleX(0.8800);">35</div>
<div class="r" style="left:8px;top:714px;width:32px;height:1px;background:#767676;"></div>
<div class="t" style="left:24.50px;top:700.57px;font-size:13.5px;color:#000;transform-origin:center top;transform:translateX(-50%) scaleX(0.8800);">36</div>
<div class="r" style="left:8px;top:728px;width:32px;height:1px;background:#767676;"></div>
<div class="t" style="left:24.50px;top:714.57px;font-size:13.5px;color:#000;transform-origin:center top;transform:translateX(-50%) scaleX(0.8800);">37</div>
<div class="r" style="left:8px;top:742px;width:32px;height:1px;background:#767676;"></div>
<div class="t" style="left:24.50px;top:728.57px;font-size:13.5px;color:#000;transform-origin:center top;transform:translateX(-50%) scaleX(0.8800);">38</div>
<div class="r" style="left:8px;top:756px;width:32px;height:1px;background:#767676;"></div>
<div class="t" style="left:24.50px;top:742.57px;font-size:13.5px;color:#000;transform-origin:center top;transform:translateX(-50%) scaleX(0.8800);">39</div>
<div class="r" style="left:8px;top:770px;width:32px;height:1px;background:#767676;"></div>
<div class="t" style="left:24.50px;top:756.57px;font-size:13.5px;color:#000;transform-origin:center top;transform:translateX(-50%) scaleX(0.8800);">40</div>
<div class="r" style="left:8px;top:784px;width:32px;height:1px;background:#767676;"></div>
<div class="t" style="left:24.50px;top:770.57px;font-size:13.5px;color:#000;transform-origin:center top;transform:translateX(-50%) scaleX(0.8800);">41</div>
<div class="r" style="left:8px;top:798px;width:32px;height:1px;background:#767676;"></div>
<div class="t" style="left:24.50px;top:784.57px;font-size:13.5px;color:#000;transform-origin:center top;transform:translateX(-50%) scaleX(0.8800);">42</div>
<div class="r" style="left:8px;top:812px;width:32px;height:1px;background:#767676;"></div>
<div class="t" style="left:24.50px;top:798.57px;font-size:13.5px;color:#000;transform-origin:center top;transform:translateX(-50%) scaleX(0.8800);">43</div>
<div class="r" style="left:8px;top:826px;width:32px;height:1px;background:#767676;"></div>
<div class="t" style="left:24.50px;top:812.57px;font-size:13.5px;color:#000;transform-origin:center top;transform:translateX(-50%) scaleX(0.8800);">44</div>
<div class="r" style="left:8px;top:840px;width:32px;height:1px;background:#767676;"></div>
<div class="t" style="left:24.50px;top:826.57px;font-size:13.5px;color:#000;transform-origin:center top;transform:translateX(-50%) scaleX(0.8800);">45</div>
<div class="r" style="left:8px;top:854px;width:32px;height:1px;background:#767676;"></div>
<div class="t" style="left:24.50px;top:840.57px;font-size:13.5px;color:#000;transform-origin:center top;transform:translateX(-50%) scaleX(0.8800);">46</div>
<div class="r" style="left:8px;top:868px;width:32px;height:1px;background:#767676;"></div>
<div class="t" style="left:24.50px;top:854.57px;font-size:13.5px;color:#000;transform-origin:center top;transform:translateX(-50%) scaleX(0.8800);">47</div>
<div class="r" style="left:8px;top:882px;width:32px;height:1px;background:#767676;"></div>
<div class="t" style="left:24.50px;top:868.57px;font-size:13.5px;color:#000;transform-origin:center top;transform:translateX(-50%) scaleX(0.8800);">48</div>
<div class="r" style="left:8px;top:896px;width:32px;height:1px;background:#767676;"></div>
<div class="t" style="left:24.50px;top:882.57px;font-size:13.5px;color:#000;transform-origin:center top;transform:translateX(-50%) scaleX(0.8800);">49</div>
<div class="r" style="left:8px;top:910px;width:32px;height:1px;background:#767676;"></div>
<div class="t" style="left:24.50px;top:896.57px;font-size:13.5px;color:#000;transform-origin:center top;transform:translateX(-50%) scaleX(0.8800);">50</div>
<div class="r" style="left:8px;top:924px;width:32px;height:1px;background:#767676;"></div>
<div class="t" style="left:24.50px;top:910.57px;font-size:13.5px;color:#000;transform-origin:center top;transform:translateX(-50%) scaleX(0.8800);">51</div>
<div class="r" style="left:8px;top:938px;width:32px;height:1px;background:#767676;"></div>
<div class="t" style="left:24.50px;top:924.57px;font-size:13.5px;color:#000;transform-origin:center top;transform:translateX(-50%) scaleX(0.8800);">52</div>
<div class="r" style="left:8px;top:952px;width:32px;height:1px;background:#767676;"></div>
<div class="t" style="left:24.50px;top:938.57px;font-size:13.5px;color:#000;transform-origin:center top;transform:translateX(-50%) scaleX(0.8800);">53</div>
<div class="r" style="left:8px;top:956px;width:1092px;height:92px;background:#f0f0f0;"></div>
<div class="r" style="left:1083px;top:167px;width:24px;height:787px;background:#f0f0f0;"></div>
<div class="r" style="left:1084px;top:174px;width:16px;height:786px;background:#f0f0f0;"></div>
<div class="r" style="left:1085px;top:191px;width:14px;height:349px;background:#c8c8c8;"></div>
<div class="r" style="left:1083px;top:168px;width:17px;height:5px;background:#a8a8a8;"></div>
<div class="r" style="left:1087px;top:170px;width:9px;height:1px;background:#111;"></div>
<svg class="r" style="left:1084px;top:174px" width="16" height="16"><path d="M3.5 10.5l4.5-4.5 4.5 4.5" fill="none" stroke="#444" stroke-width="2.2"/></svg>
<svg class="r" style="left:1084px;top:939px" width="16" height="16"><path d="M4 6l4 4 4-4" fill="none" stroke="#333" stroke-width="1.6"/></svg>
<div class="r" style="left:1100px;top:132px;width:1px;height:916px;background:#b5b5b5;"></div>
<div class="r" style="left:1106px;top:132px;width:1px;height:916px;background:#b5b5b5;"></div>
<div class="r" style="left:1101px;top:132px;width:5px;height:916px;background:#f5f5f5;"></div>
<div class="r" style="left:1100px;top:524px;width:7px;height:73px;background:#6e6e6e;"></div>
<svg class="r" style="left:1100px;top:552px" width="7" height="14"><path d="M1.5 3l4 4-4 4z" fill="#fff"/></svg>
<svg class="r" style="left:10px;top:956px" width="14" height="14"><path d="M9 3l-4 4 4 4" fill="none" stroke="#333" stroke-width="1.6"/></svg>
<div class="r" style="left:24px;top:957px;width:414px;height:13px;background:#c8c8c8;"></div>
<svg class="r" style="left:1062px;top:956px" width="14" height="14"><path d="M5 3l4 4-4 4" fill="none" stroke="#333" stroke-width="1.6"/></svg>
<div class="r" style="left:1078px;top:956px;width:4px;height:15px;background:#8a8a8a;"></div>
<div class="r" style="left:8px;top:971px;width:1092px;height:1px;background:#f0f0f0;"></div>
<svg class="r" style="left:0px;top:973px" width="110" height="16">
<path d="M20.5 4v9" stroke="#a0a0a0" stroke-width="1.4"/><path d="M27 4l-6 4.5 6 4.5z" fill="#a0a0a0"/>
<path d="M42 4l-6 4.5 6 4.5z" fill="#a0a0a0"/>
<path d="M53 4l6 4.5-6 4.5z" fill="#a0a0a0"/>
<path d="M69 4l6 4.5-6 4.5z" fill="#a0a0a0"/><path d="M76 4v9" stroke="#a0a0a0" stroke-width="1.4"/>
<path d="M91 8.5h10M96 3.5v10" stroke="#000" stroke-width="2.8"/>
</svg>
<div class="r" style="left:111px;top:972px;width:248px;height:1px;background:#b0b0b0;"></div>
<div class="r" style="left:111px;top:988px;width:248px;height:1px;background:#808080;"></div>
<div class="r" style="left:112px;top:972px;width:67px;height:17px;background:#ffffff;"></div>
<div class="r" style="left:111px;top:972px;width:1px;height:17px;background:#707070;"></div>
<div class="r" style="left:179px;top:972px;width:1px;height:17px;background:#707070;"></div>
<div class="r" style="left:266px;top:972px;width:1px;height:17px;background:#707070;"></div>
<div class="r" style="left:359px;top:972px;width:1px;height:17px;background:#707070;"></div>
<div class="r" style="left:180px;top:973px;width:86px;height:15px;background:#ebebeb;"></div>
<div class="r" style="left:267px;top:973px;width:92px;height:15px;background:#ebebeb;"></div>
<div class="r" style="left:112px;top:988px;width:67px;height:1px;background:#ffffff;"></div>
<div class="t" style="left:123.00px;top:974.42px;font-size:12.5px;color:#000;font-weight:bold;transform-origin:left top;transform: scaleX(0.8595);">simspec</div>
<div class="t" style="left:192.00px;top:974.42px;font-size:12.5px;color:#000;transform-origin:left top;transform: scaleX(0.9121);">Data Tables</div>
<div class="t" style="left:279.00px;top:974.42px;font-size:12.5px;color:#000;transform-origin:left top;transform: scaleX(0.9393);">Bowen Mag</div>
<div class="r" style="left:8px;top:990px;width:1139px;height:1px;background:#dadada;"></div>
<div class="r" style="left:8px;top:991px;width:1139px;height:37px;background:#f0f0f0;"></div>
<div class="r" style="left:12px;top:999px;width:1px;height:1px;background:#555;"></div>
<div class="r" style="left:12px;top:1002px;width:1px;height:1px;background:#555;"></div>
<div class="r" style="left:12px;top:1005px;width:1px;height:1px;background:#555;"></div>
<div class="r" style="left:12px;top:1008px;width:1px;height:1px;background:#555;"></div>
<div class="r" style="left:12px;top:1011px;width:1px;height:1px;background:#555;"></div>
<div class="r" style="left:12px;top:1014px;width:1px;height:1px;background:#555;"></div>
<div class="r" style="left:12px;top:1017px;width:1px;height:1px;background:#555;"></div>
<svg class="r" style="left:26px;top:998px" width="20" height="20"><path d="M3.5 3.5l12 12M15.5 3.5l-12 12" stroke="#7a7a7a" stroke-width="4" stroke-linecap="round"/><path d="M3.5 3.5l12 12M15.5 3.5l-12 12" stroke="#9a9a9a" stroke-width="2" stroke-linecap="round"/></svg>
<div class="r" style="left:53px;top:997px;width:249px;height:22px;background:#ababab;"></div>
<div class="r" style="left:54px;top:998px;width:247px;height:20px;background:#ffffff;"></div>
<div class="r" style="left:284px;top:999px;width:16px;height:17px;background:#dcdcdc;"></div>
<div class="r" style="left:284px;top:999px;width:1px;height:17px;background:#adadad;"></div>
<svg class="r" style="left:284px;top:999px" width="16" height="17"><path d="M4 7l4 4 4-4" fill="none" stroke="#444" stroke-width="1.2"/></svg>
<div class="t" style="left:57.00px;top:1002.42px;font-size:12.5px;color:#7a7a7a;transform-origin:left top;transform: scaleX(0.9870);">Find</div>
<svg class="r" style="left:310px;top:997px" width="60" height="22"><path d="M5 9l6 5 6-5M5 5l6 5 6-5M11 2v9" fill="none" stroke="#c8c8c8" stroke-width="1.5"/><path d="M35 13l6-5 6 5M35 17l6-5 6 5M41 9v11" fill="none" stroke="#c8c8c8" stroke-width="1.5"/></svg>
<div class="t" style="left:371.80px;top:1002.42px;font-size:12.5px;color:#000;transform-origin:left top;transform: scaleX(0.9636);">Find All</div>
<div class="r" style="left:420px;top:1001px;width:13px;height:13px;background:#333;"></div>
<div class="r" style="left:421px;top:1002px;width:11px;height:11px;background:#fff;"></div>
<div class="t" style="left:437.00px;top:1002.42px;font-size:12.5px;color:#000;transform-origin:left top;transform: scaleX(0.9296);">Match Case</div>
<div class="r" style="left:437px;top:1015px;width:8px;height:1px;background:#000;"></div>
<svg class="r" style="left:513px;top:996px" width="26" height="24">
<circle cx="10" cy="10" r="7" fill="#e8f0fa" stroke="#2a63b8" stroke-width="2.6"/>
<path d="M15 15l6 6" stroke="#333" stroke-width="3"/>
<path d="M12 14l9-10 2 2-9 10z" fill="#f0a030" stroke="#7a4a10" stroke-width="0.6"/>
<circle cx="22.5" cy="4.5" r="1.8" fill="#e04040"/>
</svg>
<div class="r" style="left:8px;top:1028px;width:1139px;height:1px;background:#c9c9c9;"></div>
<div class="r" style="left:8px;top:1029px;width:1139px;height:19px;background:#f0f0f0;"></div>
<div class="r" style="left:180px;top:1031px;width:1px;height:15px;background:#a0a0a0;"></div>
<div class="r" style="left:431px;top:1031px;width:1px;height:15px;background:#a0a0a0;"></div>
<div class="r" style="left:638px;top:1031px;width:1px;height:15px;background:#a0a0a0;"></div>
<div class="r" style="left:706px;top:1031px;width:1px;height:15px;background:#a0a0a0;"></div>
<div class="r" style="left:736px;top:1031px;width:1px;height:15px;background:#a0a0a0;"></div>
<div class="r" style="left:765px;top:1031px;width:1px;height:15px;background:#a0a0a0;"></div>
<div class="r" style="left:794px;top:1031px;width:1px;height:15px;background:#a0a0a0;"></div>
<div class="r" style="left:959px;top:1031px;width:1px;height:15px;background:#a0a0a0;"></div>
<div class="r" style="left:1101px;top:1031px;width:1px;height:15px;background:#a0a0a0;"></div>
<div class="t" style="left:18.00px;top:1033.33px;font-size:13.2px;color:#000;transform-origin:left top;transform: scaleX(0.8569);">Sheet 1 of 3</div>
<div class="t" style="left:189.00px;top:1033.33px;font-size:13.2px;color:#000;transform-origin:left top;transform: scaleX(0.8794);">2 rows, 1 columns selected</div>
<div class="t" style="left:439.00px;top:1033.33px;font-size:13.2px;color:#000;transform-origin:left top;transform: scaleX(0.8505);">PageStyle_simspec</div>
<div class="t" style="left:858.50px;top:1033.33px;font-size:13.2px;color:#000;transform-origin:left top;transform: scaleX(0.9007);">Sum=0</div>
<div class="t" style="left:1112.60px;top:1033.33px;font-size:13.2px;color:#000;transform-origin:left top;transform: scaleX(0.8138);">85%</div>
<svg class="r" style="left:712px;top:1030px" width="50" height="16">
<rect x="5" y="5" width="10" height="6" fill="#777"/><path d="M17 3v10M15 3h4M15 13h4" stroke="#777" stroke-width="1"/>
<path d="M33 2.5h7v11h-9v-9z" fill="#fff" stroke="#777"/><path d="M38 4l1 2 2-1-1 2 2 1-2 .5 1 2-2-1-.5 2-.5-2-2 1 1-2-2-.5 2-1-1-2 2 1z" fill="#d02020" transform="translate(0,0) scale(1)"/>
</svg>
<svg class="r" style="left:966px;top:1030px" width="130" height="16">
<path d="M2 8h8" stroke="#555" stroke-width="1.2"/>
<path d="M17 8.5h96" stroke="#999" stroke-width="1.2"/>
<circle cx="55" cy="8.5" r="4" fill="#fff" stroke="#555" stroke-width="1"/>
<path d="M65 3v11" stroke="#555" stroke-width="1.2"/>
<path d="M118 8h9M122.5 3.5v9" stroke="#555" stroke-width="1.2"/>
</svg>
</body></html>
